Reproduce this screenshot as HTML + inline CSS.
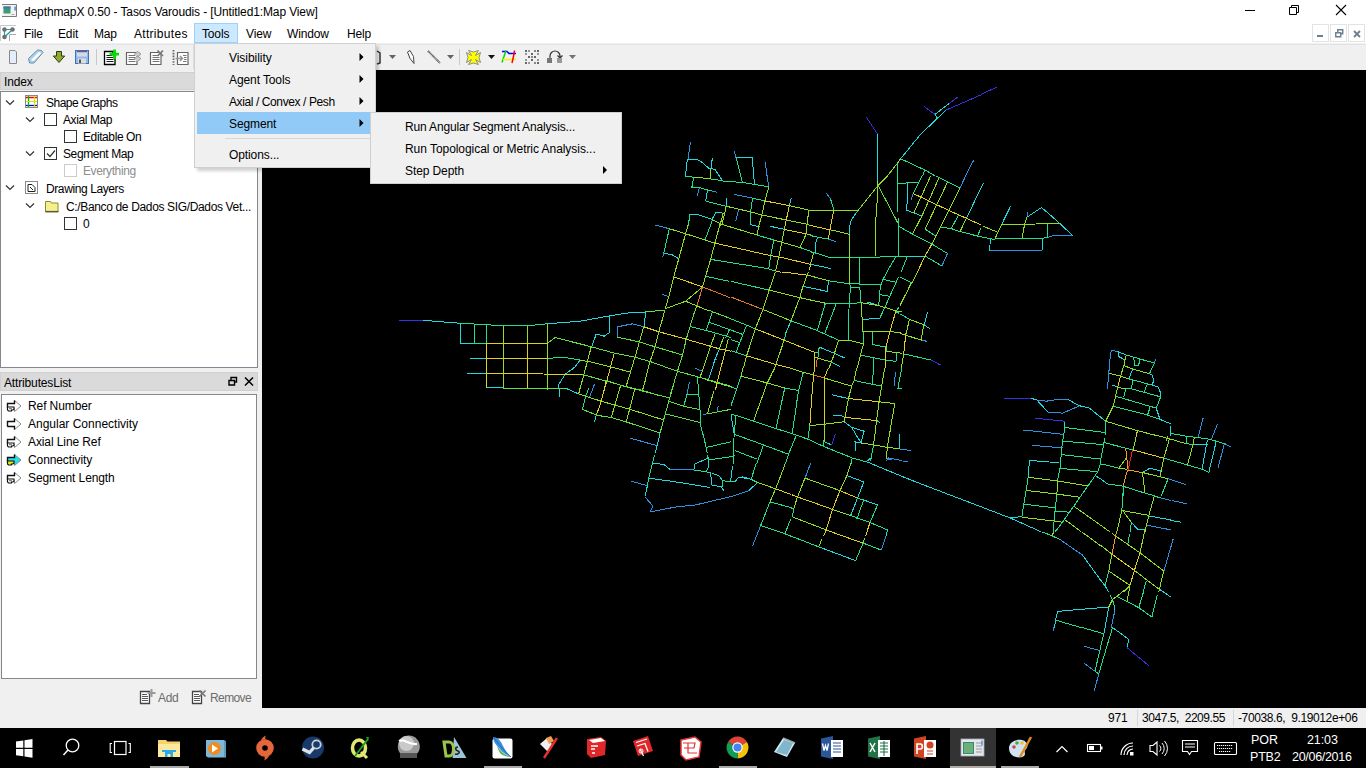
<!DOCTYPE html>
<html><head><meta charset="utf-8">
<style>
*{box-sizing:border-box;margin:0;padding:0}
html,body{width:1366px;height:768px;overflow:hidden;background:#f0f0f0;position:relative;font-family:"Liberation Sans",sans-serif;font-size:12px;color:#000}
.a{position:absolute}
.t{position:absolute;white-space:nowrap;line-height:14px;height:14px;letter-spacing:-0.15px}
.tb{position:absolute;white-space:nowrap;line-height:14px;height:14px;color:#fff;letter-spacing:-0.1px}
</style></head><body>
<!-- title bar -->
<div class="a" style="left:0;top:0;width:1366px;height:43px;background:#fff"></div>
<div class="a" style="left:0;top:44px;width:1366px;height:1px;background:#e3e3e3"></div>
<div class="t" style="left:24px;top:5px;letter-spacing:-0.12px">depthmapX 0.50 - Tasos Varoudis - [Untitled1:Map View]</div>
<!-- title icon -->
<svg class="a" style="left:2px;top:4px" width="16" height="13" viewBox="0 0 16 13">
<path d="M0 0.5H14.5V12.5H0" fill="#f2f2f2" stroke="#7a7a7a" stroke-width="1"/>
<rect x="1.5" y="2.5" width="7" height="7" fill="#3f9a74"/>
<rect x="1.5" y="2.5" width="7" height="2" fill="#3a78b8"/>
<rect x="12.5" y="2.5" width="1.2" height="4" fill="#2a6fd0"/>
<rect x="9.5" y="10" width="3" height="1" fill="#aaa"/>
</svg>
<!-- window controls -->
<div class="a" style="left:1245px;top:10px;width:10px;height:1px;background:#000"></div>
<svg class="a" style="left:1289px;top:4px" width="12" height="12" viewBox="0 0 12 12"><path d="M0.5 3.5h7v7h-7z M2.5 3.5v-2h7v7h-2" fill="none" stroke="#000"/></svg>
<svg class="a" style="left:1335px;top:4px" width="12" height="12" viewBox="0 0 12 12"><path d="M1 1L11 11M11 1L1 11" stroke="#000" stroke-width="1.1"/></svg>
<!-- menu bar -->
<svg class="a" style="left:0;top:24px" width="17" height="18" viewBox="0 24 17 18">
<path d="M0.5 41V25.5H16" stroke="#c8c8c8" fill="none"/>
<path d="M9.5 41V34.5H16" stroke="#aaa" fill="none"/>
<path d="M4.5 29.5H12.5L4.5 37Z" stroke="#22a0a0" stroke-width="1.2" fill="none"/>
<circle cx="4.5" cy="29.5" r="2.3" fill="#6f6f6f"/><circle cx="12.5" cy="29.5" r="2.3" fill="#6f6f6f"/><circle cx="4.5" cy="37" r="2.3" fill="#6f6f6f"/>
</svg>
<div class="t" style="left:24px;top:27px">File</div>
<div class="t" style="left:58px;top:27px">Edit</div>
<div class="t" style="left:94px;top:27px">Map</div>
<div class="t" style="left:134px;top:27px;letter-spacing:0.3px">Attributes</div>
<div class="a" style="left:194px;top:23px;width:44px;height:20px;background:#cce8ff;border:1px solid #99d1ff"></div>
<div class="t" style="left:202px;top:27px">Tools</div>
<div class="t" style="left:246px;top:27px">View</div>
<div class="t" style="left:287px;top:27px">Window</div>
<div class="t" style="left:347px;top:27px">Help</div>
<!-- MDI buttons -->
<div class="a" style="left:1312px;top:24px;width:17px;height:18px;border:1px solid #e3e3e3;background:#fff"></div>
<div class="a" style="left:1330px;top:24px;width:17px;height:18px;border:1px solid #e3e3e3;background:#fff"></div>
<div class="a" style="left:1348px;top:24px;width:17px;height:18px;border:1px solid #e3e3e3;background:#fff"></div>
<div class="a" style="left:1317px;top:35px;width:6px;height:2px;background:#6c7f90"></div>
<svg class="a" style="left:1335px;top:29px" width="9" height="9" viewBox="0 0 9 9"><path d="M0.75 3.75h5v4h-5z M2.75 3.75v-3h5v4h-2" fill="none" stroke="#6c7f90" stroke-width="1.4"/></svg>
<svg class="a" style="left:1353px;top:30px" width="8" height="8" viewBox="0 0 8 8"><path d="M1 1L7 7M7 1L1 7" stroke="#6c7f90" stroke-width="1.8"/></svg>
<!-- toolbar -->
<div class="a" style="left:0;top:45px;width:1366px;height:25px;background:#f0f0f0"></div>
<svg class="a" style="left:0;top:44px" width="600" height="26" viewBox="0 44 600 26">
<!-- new doc -->
<path d="M9.5 50.5h5.5l1.5 1.5v11.5h-7z" fill="#e4eefa" stroke="#8a8a8a"/>
<!-- open folder -->
<path d="M28.5 58.5l9-8.5 4 0.5 1.5 2-9 10.5h-4.5z" fill="#a9d3ea" stroke="#6d8fa5"/>
<path d="M31 60l8-8 2.5 1-8 8z" fill="#fff"/>
<!-- green arrow -->
<path d="M56.5 51.5h5v4.5h3.2l-5.7 6.5-5.7-6.5h3.2z" fill="#8faa2c" stroke="#2f3a10"/>
<!-- save -->
<rect x="75.5" y="50.5" width="13" height="13" fill="#8dbcef" stroke="#4a6fa8"/>
<rect x="77" y="51" width="10" height="1.2" fill="#6a4fb0"/>
<rect x="77" y="52.5" width="10" height="4" fill="#d8d8e0"/>
<rect x="78" y="58.5" width="8" height="5" fill="#ddd"/>
<rect x="79" y="59.5" width="2" height="3.5" fill="#555"/>
<!-- sep -->
<rect x="96" y="49" width="1" height="16" fill="#c8c8c8"/>
<!-- doc + -->
<path d="M104.5 51.5h8.5v1h2v12h-10.5z" fill="#fff" stroke="#000" stroke-width="1.3"/>
<path d="M106.5 55.5h6M106.5 57.5h7M106.5 59.5h7M106.5 61.5h7" stroke="#000" stroke-width="0.9"/>
<path d="M114.5 49.5v9.5M109.5 54.2h9.5" stroke="#00e000" stroke-width="2.8"/>
<!-- doc edit gray -->
<path d="M126.5 52.5h10.5v12h-10.5z" fill="#fff" stroke="#666" stroke-width="1.2"/>
<path d="M128.5 55.5h7M128.5 57.5h7M128.5 59.5h7M128.5 61.5h7" stroke="#666" stroke-width="0.9"/>
<path d="M134 54.5l3.5-3 3.5 2.5-3.5 3M134 59l3.5-3 3.5 2.5-3.5 3" fill="#ccc" stroke="#999" stroke-width="1"/>
<!-- doc x gray -->
<path d="M150.5 52.5h10.5v12h-10.5z" fill="#fff" stroke="#666" stroke-width="1.2"/>
<path d="M152.5 55.5h6M152.5 57.5h7M152.5 59.5h7M152.5 61.5h7" stroke="#666" stroke-width="0.9"/>
<path d="M157.5 50.5l5.5 5.5M163 50.5l-5.5 5.5" stroke="#777" stroke-width="1.7"/>
<!-- dotted doc -->
<path d="M173.5 50v15" stroke="#666" stroke-width="1.8" stroke-dasharray="1.6 1.2"/>
<path d="M177.5 52.5h10.5v12h-10.5z" fill="#fff" stroke="#666" stroke-width="1.2"/>
<path d="M183 55.5h3.5M183 61.5h3.5M184 57.5h2.5M184 59.5h2.5" stroke="#666" stroke-width="0.9"/>
<path d="M175.5 58.5h6M180 56l2.5 2.5-2.5 2.5" fill="none" stroke="#999" stroke-width="1.6"/>
<rect x="193" y="44" width="1" height="25" fill="#dcdcdc"/>
<!-- partial icon near 377 -->
<path d="M377 51l3 2v10l-3 1" fill="none" stroke="#333" stroke-width="1.5"/>
<path d="M389 55h7l-3.5 4z" fill="#5f656d"/>
<!-- pencil -->
<path d="M407.5 52l2.5-1.5 3.5 6 0.5 7-4-5z" fill="#fff" stroke="#444"/>
<!-- line -->
<path d="M428 51l12 12" stroke="#555" stroke-width="2" stroke-dasharray="1 0.5"/>
<path d="M447 55h7l-3.5 4z" fill="#5f656d"/>
<rect x="459" y="49" width="1" height="16" fill="#c8c8c8"/>
<!-- yellow cross -->
<path d="M468.5 50.5L473.5 52L478.5 50.5L475.5 55.5L480.5 52.5L479 57.5L480.5 62.5L475.5 59.5L478.5 64.5L473.5 63L468.5 64.5L471.5 59.5L466.5 62.5L468 57.5L466.5 52.5L471.5 55.5Z" fill="#ffff00" stroke="#8c8c8c" stroke-linejoin="round"/>
<path d="M488 55h7l-3.5 4z" fill="#111"/>
<!-- colored square -->
<path d="M502 51.5h5l2 2h7" stroke="#0000ff" stroke-width="1.5" fill="none"/>
<path d="M506 50.5l-2 6-2 6" stroke="#00dd00" stroke-width="1.5" fill="none"/>
<path d="M503 59.5h10h3" stroke="#ffee00" stroke-width="1.5" fill="none"/>
<path d="M514.5 50.5l-1 6-1.5 6.5" stroke="#ff0000" stroke-width="1.5" fill="none"/>
<!-- dotted grid -->
<g fill="#666">
<rect x="525" y="50" width="2" height="2"/><rect x="528" y="50" width="2" height="2" fill="#999"/><rect x="534" y="50" width="2" height="2" fill="#888"/><rect x="537" y="50" width="2" height="2"/>
<rect x="525" y="53" width="2" height="2" fill="#999"/><rect x="531" y="53" width="2" height="2"/><rect x="537" y="53" width="2" height="2" fill="#999"/>
<rect x="528" y="56" width="2" height="2"/><rect x="531" y="56" width="2" height="2" fill="#888"/><rect x="534" y="56" width="2" height="2"/>
<rect x="525" y="59" width="2" height="2" fill="#999"/><rect x="531" y="59" width="2" height="2"/><rect x="537" y="59" width="2" height="2" fill="#999"/>
<rect x="525" y="62" width="2" height="2"/><rect x="528" y="62" width="2" height="2" fill="#999"/><rect x="534" y="62" width="2" height="2" fill="#888"/><rect x="537" y="62" width="2" height="2"/>
</g>
<!-- arc -->
<path d="M550 58v-2a5 5 0 0 1 10 0v1M557.5 55.5l2.5 2.5 2.5-2.5" fill="none" stroke="#333" stroke-width="1.2"/>
<rect x="547" y="58" width="5" height="5" fill="#777"/><rect x="557" y="58" width="5" height="5" fill="#999"/>
<path d="M569 55h7l-3.5 4z" fill="#6d737a"/>

</svg>

<!-- left dock -->
<div class="a" style="left:0;top:70px;width:262px;height:638px;background:#f0f0f0"></div>
<div class="a" style="left:0;top:72px;width:258px;height:18px;background:#dadada;border:1px solid #d0d0d0"></div>
<div class="t" style="left:4px;top:75px">Index</div>
<div class="a" style="left:0;top:91px;width:258px;height:277px;background:#fff;border:1px solid #828790"></div>
<!-- tree rows -->
<svg class="a" style="left:0;top:92px" width="258" height="140" viewBox="0 92 258 140">
<g fill="none" stroke="#333" stroke-width="1.2">
<path d="M6 100.5l4 4 4-4"/>
<path d="M26 117.5l4 4 4-4"/>
<path d="M26 151.5l4 4 4-4"/>
<path d="M6 185.5l4 4 4-4"/>
<path d="M26 203.5l4 4 4-4"/>
</g>
<g fill="#fff" stroke="#333">
<rect x="44.5" y="113.5" width="12" height="12"/>
<rect x="64.5" y="130.5" width="12" height="12"/>
<rect x="44.5" y="147.5" width="12" height="12"/>
<rect x="64.5" y="217.5" width="12" height="12"/>
</g>
<rect x="64.5" y="164.5" width="12" height="12" fill="#fff" stroke="#ccc"/>
<path d="M47 153.5l3 3 5-6" fill="none" stroke="#333" stroke-width="1.2"/>
<!-- shape graphs icon -->
<rect x="25.5" y="95.5" width="12" height="12" fill="#fff" stroke="#888"/>
<path d="M26 97.5h11" stroke="#e00" stroke-width="1.5"/>
<path d="M26 105.5h11" stroke="#00d" stroke-width="1.3"/>
<path d="M28.5 96v11" stroke="#0b0" stroke-width="1.3"/>
<path d="M34.5 96v11" stroke="#dd0" stroke-width="1.3"/>
<path d="M26 101.5h11" stroke="#dd0" stroke-width="1"/>
<!-- drawing layers icon -->
<rect x="25.5" y="181.5" width="12" height="12" fill="#fff" stroke="#888"/>
<path d="M28 184.5h4l3 3v4h-7z" fill="#fff" stroke="#222"/>
<path d="M30 187l3 3" stroke="#222"/>
<!-- folder -->
<path d="M45.5 201.5h5l1 1.5h6.5v9h-12.5z" fill="#f5f08a" stroke="#8b8b30"/>
<path d="M45.5 211.5h13" stroke="#555" stroke-width="1.2"/>
</svg>
<div class="t" style="left:46px;top:96px;letter-spacing:-0.5px">Shape Graphs</div>
<div class="t" style="left:63px;top:113px;letter-spacing:-0.4px">Axial Map</div>
<div class="t" style="left:83px;top:130px;letter-spacing:-0.4px">Editable On</div>
<div class="t" style="left:63px;top:147px;letter-spacing:-0.4px">Segment Map</div>
<div class="t" style="left:83px;top:164px;letter-spacing:-0.4px;color:#8d8d8d">Everything</div>
<div class="t" style="left:46px;top:182px;letter-spacing:-0.4px">Drawing Layers</div>
<div class="t" style="left:66px;top:200px;letter-spacing:-0.35px">C:/Banco de Dados SIG/Dados Vet...</div>
<div class="t" style="left:83px;top:217px">0</div>

<div class="a" style="left:0;top:372px;width:258px;height:19px;background:#dadada;border:1px solid #d0d0d0"></div>
<div class="t" style="left:4px;top:376px">AttributesList</div>
<svg class="a" style="left:228px;top:376px" width="10" height="10" viewBox="0 0 10 10"><path d="M1 4.5h5.5v4.5h-5.5z M3 4.5v-3h5.5v4.5h-2" fill="none" stroke="#000" stroke-width="1.4"/></svg>
<svg class="a" style="left:244px;top:377px" width="10" height="9" viewBox="0 0 10 9"><path d="M1 0.5L9 8.5M9 0.5L1 8.5" stroke="#000" stroke-width="1.5"/></svg>
<div class="a" style="left:1px;top:394px;width:256px;height:285px;background:#fff;border:1px solid #828790"></div>
<svg class="a" style="left:0;top:396px" width="30" height="90" viewBox="0 396 30 90"><g transform="translate(7,400)"><path d="M0.5 3.5h7v-3l6.5 5.5-6.5 5.5v-3h-7z" fill="#fff" stroke="#888" stroke-width="1"/><path d="M7.5 0.5v3h-7v5" fill="none" stroke="#111" stroke-width="1.4"/><path d="M0.5 7h6.5v2l-1 1h-1.5v1h-3l-1-1z" fill="#fff" stroke="#111" stroke-width="1.1"/><path d="M2 8.7h3" stroke="#555" stroke-width="0.9"/></g><g transform="translate(7,418)"><path d="M0.5 3.5h7v-3l6.5 5.5-6.5 5.5v-3h-7z" fill="#fff" stroke="#888" stroke-width="1"/><path d="M7.5 0.5v3h-7v5" fill="none" stroke="#111" stroke-width="1.4"/><path d="M0.5 8.5h7v3" fill="none" stroke="#111" stroke-width="1.4"/></g><g transform="translate(7,436)"><path d="M0.5 3.5h7v-3l6.5 5.5-6.5 5.5v-3h-7z" fill="#fff" stroke="#888" stroke-width="1"/><path d="M7.5 0.5v3h-7v5" fill="none" stroke="#111" stroke-width="1.4"/><path d="M0.5 7h6.5v2l-1 1h-1.5v1h-3l-1-1z" fill="#fff" stroke="#111" stroke-width="1.1"/><path d="M2 8.7h3" stroke="#555" stroke-width="0.9"/></g><g transform="translate(7,454)"><path d="M0.5 3.5h7v-3l6.5 5.5-6.5 5.5v-3h-7z" fill="#22e0f0" stroke="#888" stroke-width="1"/><path d="M7.5 0.5v3h-7v5" fill="none" stroke="#111" stroke-width="1.4"/><path d="M0.5 7h6.5v2l-1 1h-1.5v1h-3l-1-1z" fill="#e8e800" stroke="#111" stroke-width="1.1"/></g><g transform="translate(7,472)"><path d="M0.5 3.5h7v-3l6.5 5.5-6.5 5.5v-3h-7z" fill="#fff" stroke="#888" stroke-width="1"/><path d="M7.5 0.5v3h-7v5" fill="none" stroke="#111" stroke-width="1.4"/><path d="M0.5 7h6.5v2l-1 1h-1.5v1h-3l-1-1z" fill="#fff" stroke="#111" stroke-width="1.1"/><path d="M2 8.7h3" stroke="#555" stroke-width="0.9"/></g></svg>
<div class="t" style="left:28px;top:399px;letter-spacing:-0.1px">Ref Number</div>
<div class="t" style="left:28px;top:417px;letter-spacing:0px">Angular Connectivity</div>
<div class="t" style="left:28px;top:435px;letter-spacing:-0.1px">Axial Line Ref</div>
<div class="t" style="left:28px;top:453px;letter-spacing:-0.1px">Connectivity</div>
<div class="t" style="left:28px;top:471px;letter-spacing:-0.1px">Segment Length</div>
<!-- add/remove -->
<svg class="a" style="left:135px;top:684px" width="80" height="24" viewBox="135 684 80 24">
<g fill="none" stroke="#444" stroke-width="1.3">
<path d="M140.5 691.5h9v12h-9z" fill="#fff"/><path d="M142 694.5h5M142 696.5h6M142 698.5h6M142 700.5h6" stroke-width="0.9"/>
<path d="M192.5 691.5h9v12h-9z" fill="#fff"/><path d="M194 694.5h5M194 696.5h6M194 698.5h6M194 700.5h6" stroke-width="0.9"/>
</g>
<path d="M151.5 689v8M147.5 693h8" stroke="#999" stroke-width="2"/>
<path d="M199.5 690.5l6 6M205.5 690.5l-6 6" stroke="#777" stroke-width="1.6"/>
</svg>
<div class="t" style="left:158px;top:691px;color:#6d6d6d;letter-spacing:-0.3px">Add</div>
<div class="t" style="left:210px;top:691px;color:#6d6d6d;letter-spacing:-0.6px">Remove</div>

<!-- map -->
<div class="a" style="left:262px;top:70px;width:1104px;height:638px;background:#000"></div>
<svg id="map" class="a" style="left:0;top:0" width="1366" height="708" viewBox="0 0 1366 708"><g fill="none" stroke-width="1" shape-rendering="crispEdges"><path d="M690.4 142.1L689.6 147.7L688.9 153.2L688.1 158.8M734.0 151.0L735.0 154.2L736.0 157.5M765.0 161.9L765.8 166.9L766.5 171.9L767.2 176.9L768.0 181.9L768.8 186.9M712.5 191.2L717.5 192.5M699.4 187.5L698.4 191.6L697.5 195.6M734.0 194.4L738.6 195.3L743.2 196.2L747.9 197.2L752.5 198.1M738.8 208.8L737.7 212.9L736.7 217.1L735.6 221.2M973.8 160.0L971.0 165.3L968.3 170.6L965.6 175.9M826.2 193.2L828.4 196.2L830.6 199.1M828.1 239.1L831.9 240.4L835.6 241.6M947.5 253.5L945.6 257.7L943.8 261.8L941.9 266.0M913.1 193.5L912.2 196.6L911.2 199.8M965.6 176.0L963.8 180.0L961.9 183.9L960.0 187.9M1027.5 212.2L1027.5 216.9M1047.6 237.5L1051.1 236.3L1054.7 235.1L1060.6 235.3L1066.5 235.4L1072.5 235.6M988.8 250.6L994.7 250.6L1000.7 250.5L1006.7 250.5L1012.6 250.5L1018.6 250.4L1024.6 250.4L1030.6 250.3L1036.5 250.3L1042.5 250.2M921.2 340.1L924.4 340.8L927.5 341.4M886.0 461.1L888.5 458.0L892.9 458.8L897.3 459.7L901.8 460.5M895.4 372.4L895.0 376.8L894.5 381.1L894.1 385.5M655.0 225.0L659.8 226.2L664.6 227.5L669.4 228.8M663.8 253.1L662.5 257.5M661.9 294.0L665.3 295.4L668.8 296.9M670.0 469.4L675.9 469.5L681.9 469.7L687.8 469.8L693.8 470.0M631.2 481.2L636.7 482.7L642.1 484.2L647.5 485.6M645.0 496.9L647.7 500.0L650.4 503.1L653.1 506.2L651.6 509.1L650.0 511.9L655.2 510.9L660.5 509.9L665.8 508.9L671.0 507.9L676.2 506.9L680.9 506.4L685.6 505.9L690.3 505.5L695.0 505.0L700.4 503.8L705.7 502.5L711.1 501.2L716.4 500.0L721.8 498.8L727.1 497.5L732.5 496.2L737.9 494.4L743.3 492.5L748.8 490.6M760.6 525.6L758.6 530.8L756.6 535.9L754.5 541.1L752.5 546.2M810.6 463.1L808.8 468.1L806.9 473.1L805.0 478.1M898.8 448.8L902.8 449.4L906.8 450.0L910.8 450.6M886.9 458.8L892.2 459.5M902.8 461.1L908.1 461.9M881.2 550.0L883.0 545.0L884.7 540.0L886.4 535.0M1036.9 400.0L1041.6 400.6L1046.2 401.2L1050.2 400.6L1054.2 400.0L1058.1 399.4L1063.1 399.4L1068.1 399.4M1048.1 412.2L1052.9 412.5L1057.7 412.8L1062.5 413.1L1067.9 410.8L1073.3 408.5L1078.8 406.2M1023.1 430.0L1028.9 430.6L1034.7 431.2L1040.5 431.9L1046.3 432.5L1052.1 433.1L1057.9 433.8L1063.8 434.4M1107.5 389.4L1107.9 384.0L1108.3 378.5L1108.8 373.1L1109.2 368.3L1109.6 363.5L1110.0 358.8L1110.6 354.7L1111.2 350.6L1116.9 351.2M1155.6 359.4L1154.4 363.1M1225.0 443.8L1227.8 445.3L1230.6 446.9M1203.1 418.1L1201.9 422.8L1200.6 427.5L1199.4 432.2L1198.1 436.9M1217.5 423.8L1215.4 429.2L1213.3 434.6L1211.2 440.0M1224.4 443.8L1223.1 448.5L1221.9 453.2L1220.6 458.0L1219.4 462.8L1218.1 467.5M1168.1 478.8L1172.5 480.2L1176.9 481.6L1181.2 483.0L1185.6 484.4M1031.9 445.4L1037.0 445.8L1042.1 446.2L1047.2 446.6L1052.3 447.0L1057.4 447.5L1062.5 447.9M1160.6 497.9L1165.7 499.1L1170.8 500.4M1147.5 525.4L1153.3 526.5L1159.1 527.6L1164.9 528.7L1170.8 529.8M1171.8 500.4L1177.0 501.6L1182.2 502.9L1187.5 504.1M1173.1 539.1L1171.6 544.5L1170.0 550.0L1168.4 555.4L1166.9 560.8L1165.3 566.2L1163.8 571.6M1060.0 539.5L1064.5 542.6L1069.0 545.8L1073.5 548.9L1078.0 552.0L1082.5 555.1M1115.0 609.5L1114.1 614.1L1113.1 618.7L1112.2 623.3L1111.2 627.9M1054.4 625.3L1053.1 630.6M1083.8 646.2L1089.2 647.7L1094.6 649.2L1100.0 650.6M1083.8 663.1L1087.5 665.8L1091.2 668.5L1095.0 671.2M1098.8 673.8L1097.3 679.4L1095.8 685.0L1094.4 690.6M715.1 359.2L716.9 359.2M695.0 368.3L698.5 369.7L701.9 371.0M617.5 337.0L617.5 331.9L617.5 326.8L622.5 325.8L627.5 324.8L632.5 323.8L638.1 325.2L643.8 326.8M630.0 438.1L635.4 439.6L640.8 441.1L646.1 442.6L651.5 444.1L656.9 445.6M594.4 384.4L592.7 388.8L591.1 393.1L589.4 397.5M689.4 381.9L688.6 386.1L687.7 390.2L686.9 394.4M702.5 414.4L707.5 413.8M718.1 406.2L716.9 411.2" stroke="#3090e0"/><path d="M688.1 158.8L687.2 159.4L686.8 164.1L686.2 168.8L685.8 172.6L685.2 176.5M687.2 159.4L692.1 159.4L696.9 159.4L699.7 160.9L702.5 162.5L705.5 165.3L708.5 168.1M712.2 158.1L711.8 163.4L711.2 168.8M708.5 168.1L711.8 168.8L715.0 169.4L717.5 173.1L720.0 176.9L722.5 180.6M736.0 157.5L741.4 157.4L746.8 157.3L752.2 157.2L752.7 162.7L753.1 168.1L753.5 173.5L754.0 178.9L754.4 184.4M707.5 190.0L706.6 195.6L705.6 201.2M726.2 198.1L726.2 202.2L726.2 206.2M791.2 198.1L790.3 201.9L789.4 205.6M690.0 214.0L693.4 214.2L696.9 214.4L700.0 215.3L703.1 216.2L707.5 217.8L711.9 219.4L714.1 215.8L716.2 212.2L719.7 212.7L723.1 213.1M877.5 134.0L877.5 140.0L877.5 146.0L877.5 151.9L877.5 157.9L877.5 163.9L877.5 169.9L877.5 175.9M935.0 114.4L939.6 110.8L944.2 107.3L948.8 103.8M900.6 158.8L903.9 154.8L907.1 150.8L910.3 146.9L913.5 142.9L916.8 139.0L920.0 135.0L923.5 131.6L927.0 128.2L930.5 124.9L934.0 121.5L937.5 118.1L941.9 114.1L946.2 110.0M877.5 176.0L877.5 181.0M858.1 210.4L854.7 215.1L851.2 219.8L850.3 223.5L849.4 227.2L849.4 230.7L849.4 234.1M817.5 237.2L816.2 241.0L815.0 244.8L815.0 248.8L815.0 252.9M907.5 256.0L913.3 256.0L919.2 256.0L925.0 256.0M810.0 264.1L815.2 265.2L820.3 266.3L825.5 267.4L830.6 268.5M907.5 182.2L907.4 187.9L907.2 193.5L907.1 199.1L907.0 204.8L906.9 210.4L910.3 211.6L913.8 212.9L917.8 214.4L921.9 216.0M980.8 188.5L978.4 193.3L976.1 198.1L973.8 202.9L971.5 207.7L969.2 212.5L966.9 217.2M983.4 183.1L981.1 188.1M1010.6 206.1L1008.4 210.7L1006.2 215.2L1003.9 219.8L1001.7 224.4M1027.5 216.9L1032.2 213.7L1036.9 210.6L1041.5 207.5L1046.0 211.4L1050.4 215.2L1054.9 219.1L1059.3 223.0L1062.9 226.3L1066.4 229.7L1069.9 233.1L1073.4 236.5M990.9 238.9L990.5 242.0M1042.5 237.5L1042.5 242.0M990.6 238.8L990.0 244.7L989.4 250.6M1042.5 242.2L1042.5 246.2L1042.5 250.2M927.5 311.9L926.5 316.2L925.4 320.6L924.4 325.0M828.5 280.8L827.9 286.1L827.2 291.4L822.4 290.4L817.5 289.4L812.6 288.4L807.8 287.4L802.9 286.4M791.0 320.8L789.3 324.7L787.7 328.7L786.0 332.6M867.2 302.0L871.2 303.2L875.2 304.5L879.1 305.8M862.2 319.5L868.1 319.1L873.9 318.7L879.8 318.2M819.1 347.0L824.1 349.1L829.1 351.2L834.1 353.2L837.9 354.9L841.6 356.6L845.4 358.2M831.0 362.0L835.4 364.2L839.8 366.4M923.8 324.5L926.9 326.7L930.0 328.9M832.2 394.9L837.7 396.1L843.1 397.4L848.5 398.6M832.9 415.5L838.5 415.8L844.1 416.1M876.6 420.5L879.8 422.4M844.1 421.8L847.9 424.6L851.6 427.4L855.8 428.6L860.0 429.9L864.1 431.1L863.1 435.1L862.0 439.0L861.0 443.0M851.6 427.4L854.0 431.3L856.3 435.2L858.7 439.1L861.0 443.0M855.4 442.4L855.7 446.8L856.0 451.1M824.1 441.8L827.9 443.3L831.6 444.9M866.0 461.8L868.5 459.9L871.0 458.0M731.0 414.9L731.8 419.4L732.6 423.9L733.3 428.5L734.1 433.0M897.9 388.6L901.8 388.6M899.8 434.2L899.5 439.2L899.3 444.2L899.1 449.2M663.8 253.1L668.1 254.1L672.5 255.0L675.6 256.9L678.8 258.8M750.0 224.4L754.7 225.6L759.4 226.9M770.0 226.2L774.8 227.3L779.6 228.3L784.4 229.4M647.5 485.6L646.2 490.9L645.0 496.2M652.5 463.1L658.1 463.8L663.8 464.4L666.9 466.9L670.0 469.4M693.8 470.0L694.4 466.9L695.0 463.8L699.4 461.9L703.8 460.0L708.1 458.1L708.4 462.2L708.8 466.2L706.2 471.2M732.5 466.2L731.9 471.2L731.2 476.2L730.6 481.2M710.6 472.5L711.0 476.7L711.5 480.8L711.9 485.0L716.6 485.9L721.2 486.9L723.8 490.6M711.9 473.1L715.3 474.4L718.8 475.6L720.6 478.1L722.5 480.6M735.0 481.9L737.5 478.1L742.5 476.9L746.9 478.1L751.2 479.4M648.8 478.1L654.0 478.9L659.2 479.6L664.4 480.3L669.6 481.0L674.8 481.8L680.0 482.5L685.0 483.3L690.0 484.2L695.0 485.0L700.0 485.8L705.0 486.7L710.0 487.5M748.8 490.6L753.1 486.6L757.5 482.5M740.0 476.9L745.6 478.4M887.5 530.0L886.9 532.9L886.2 535.9M863.8 500.0L868.3 501.7L872.9 503.3L877.5 505.0M846.9 475.6L852.5 477.7L858.1 479.8L863.8 481.9L861.7 487.3L859.6 492.7L857.5 498.1L855.8 502.5L854.1 506.9L852.3 511.2L850.6 515.6M866.9 461.9L872.4 464.1L877.8 466.4L883.3 468.7L888.8 470.9L894.3 473.2L899.8 475.5L905.3 477.7L910.8 480.0M854.4 441.9L857.5 442.2L860.6 442.5M910.8 480.0L916.3 482.1L921.9 484.2L927.5 486.4L933.1 488.5L938.6 490.6L944.2 492.8L949.8 494.9L955.4 497.0L961.0 499.1L966.5 501.2L972.1 503.4L977.7 505.5L983.3 507.6L988.8 509.8L994.4 511.9L1000.0 514.0M818.8 546.9L824.0 548.8L829.3 550.8L834.6 552.8L839.8 554.7L845.1 556.7L850.4 558.7L855.6 560.6M1030.6 398.1L1033.8 399.1L1036.9 400.0M1068.1 399.4L1071.7 401.5L1075.2 403.5L1078.8 405.6L1084.1 406.9L1089.4 408.1L1093.4 411.4L1097.5 414.7L1101.6 418.0L1105.6 421.2M1036.9 400.0L1040.6 404.1L1044.4 408.2L1048.1 412.2M1065.0 421.2L1064.7 424.4L1064.4 427.5M1116.9 351.2L1121.6 353.1L1126.2 355.0M1118.8 352.5L1118.1 356.2L1121.6 358.1L1125.0 360.0M1149.4 373.8L1151.9 374.4L1152.8 377.5L1153.8 380.6L1151.9 385.0M1132.5 369.4L1130.6 374.1L1128.8 378.8M1111.9 385.0L1117.5 386.9M1151.9 385.0L1155.0 385.9L1158.1 386.9L1159.4 390.0L1160.6 393.1L1160.6 396.9M1156.2 408.1L1158.1 413.8L1160.0 419.4L1165.4 421.6L1170.8 423.8M1170.0 426.2L1170.0 431.1L1170.0 435.9M1193.1 444.4L1197.9 444.4L1202.7 444.4L1207.5 444.4M1207.5 440.0L1206.9 443.1L1206.2 446.2L1205.4 451.0L1204.5 455.8L1203.6 460.5L1202.8 465.2L1201.9 470.0M1216.2 441.2L1215.0 446.5L1213.8 451.7L1212.5 456.9L1211.2 462.1L1210.0 467.3L1208.8 472.5M1142.5 472.5L1146.2 470.3L1150.0 468.1L1155.6 469.7L1161.2 471.2M1100.0 478.1L1103.4 480.9L1106.9 483.8M1029.4 460.4L1034.4 460.8L1039.4 461.2L1044.4 461.6L1049.4 462.0L1054.4 462.5L1059.4 462.9M1029.4 460.4L1029.0 466.0L1028.5 471.6L1028.1 477.2M1131.2 522.2L1134.4 525.7L1137.5 529.1L1141.2 529.1L1145.0 529.1M1096.2 476.0L1100.0 478.7M1148.8 516.0L1154.2 516.9L1159.8 517.9L1165.2 518.8L1170.8 519.8M1000.0 514.1L1005.0 516.0L1010.0 517.9L1015.9 517.2L1021.9 516.6M1010.0 517.9L1015.2 520.2L1020.4 522.5L1025.6 524.9L1030.8 527.2L1036.0 529.5L1041.2 531.9M1170.0 520.2L1175.3 521.2L1180.6 522.2M1100.0 579.1L1102.5 582.6L1105.0 586.0L1106.9 588.9L1108.8 591.9M1082.5 555.1L1085.5 559.3L1088.6 563.5L1091.6 567.7L1094.6 571.9L1097.7 576.1L1100.7 580.3M1158.8 588.9L1162.8 591.6L1166.8 594.3L1170.8 597.0M1108.8 607.0L1103.1 607.5L1097.4 608.0L1091.7 608.5L1086.0 608.9L1080.3 609.4L1074.6 609.9L1068.9 610.4L1063.2 610.9L1057.5 611.4L1056.6 615.8L1055.6 620.1L1055.0 624.0L1054.4 627.9M1108.8 607.0L1107.8 612.2L1106.9 617.4L1105.9 622.7L1105.0 627.9M1104.8 628.5L1103.8 633.8M1112.5 627.5L1116.6 630.5L1120.6 633.4L1124.7 636.4L1128.8 639.4L1127.8 643.4L1126.9 647.5M719.2 349.2L717.1 354.2L715.1 359.2L713.4 364.4L711.7 369.7L710.0 374.9L708.3 380.2M422.5 320.2L427.9 320.7L433.2 321.1L438.6 321.5L443.9 322.0L449.3 322.4L454.6 322.8L460.0 323.2M547.5 323.8L552.9 323.3L558.3 322.9L563.8 322.5L569.2 322.1L574.6 321.7L580.0 321.2L585.0 320.3L590.0 319.4L595.0 318.5L600.0 317.6L605.0 316.7L610.0 315.8L614.8 315.0L619.5 314.2L624.2 313.5L629.0 312.8L633.8 312.0L639.6 312.0L645.5 312.0L645.1 316.8L644.7 321.5L644.2 326.2M460.0 323.2L460.0 328.2L460.0 333.2L460.0 338.2L460.0 343.2L464.8 343.2L469.5 343.2L474.2 343.2M470.0 358.2L475.4 358.2L480.8 358.2L486.2 358.2M467.0 373.2L471.8 373.2L476.6 373.2L481.4 373.2L486.2 373.2M486.2 387.5L491.9 387.5L497.6 387.5L503.2 387.5M566.2 388.2L570.4 390.2L574.6 392.1L578.8 394.0M580.0 360.0L577.5 363.5L575.0 367.0L571.7 369.5L568.3 372.0L565.0 374.5L561.9 379.5L558.8 384.5L559.0 388.7L559.2 392.8L559.5 397.0M609.2 315.5L609.2 321.3L609.2 327.2L609.2 333.0L607.5 333.8L604.2 336.2L600.2 335.1L596.2 334.0L594.8 338.2L593.2 342.5L591.8 346.8M560.0 388.1L563.5 388.4L566.9 388.8L570.9 390.5L574.8 392.2L578.8 394.0M596.2 415.6L595.3 418.8L594.4 421.9M660.0 433.1L658.9 438.1L657.7 443.1L656.5 448.1L655.4 453.1M700.0 409.6L700.0 413.9L700.0 418.2L700.0 422.5" stroke="#20d8e0"/><path d="M685.2 176.5L689.5 176.8L693.8 177.1M710.0 178.8L714.4 179.5L718.8 180.2L723.1 181.0L728.0 181.4L732.8 181.8L737.7 182.1L742.5 182.5L746.5 183.1L750.4 183.8L754.4 184.4L759.2 185.2L764.0 186.0L768.8 186.9M736.0 157.5L737.3 162.5L738.6 167.5L739.9 172.5L741.2 177.5L742.5 182.5M693.8 177.1L692.8 182.2L691.9 187.2L695.6 187.4L699.4 187.5L703.4 188.8L707.5 190.0L712.5 191.2M705.6 201.2L710.8 202.5L715.9 203.8L721.1 205.0L726.2 206.2M752.5 198.1L756.7 199.1L760.8 200.0L765.0 201.0M752.5 198.1L751.9 202.7L751.2 207.3L750.6 211.9L750.4 215.9L750.2 220.0L750.0 224.0M690.0 214.0L689.4 218.0L688.8 221.9L688.1 225.9M935.0 114.4L937.5 118.1M897.5 163.1L897.5 167.4L897.5 171.6L897.5 175.9M900.6 158.8L905.5 161.0L910.4 163.2L915.2 165.5L920.1 167.8L925.0 170.0L930.0 172.9L935.0 175.9M925.0 170.0L923.8 172.9L922.5 175.9M830.6 199.1L832.2 204.6L833.8 210.0M810.0 235.4L813.8 236.3L817.5 237.2L822.8 238.2L828.1 239.1M810.0 251.6L815.0 252.9L820.2 254.5L825.4 256.2L830.6 257.9L836.2 257.8L841.7 257.7L847.3 257.6L852.8 257.6L858.4 257.5L863.9 257.4L869.5 257.3L875.0 257.2L880.4 257.0L885.8 256.8L891.2 256.6L896.7 256.4L902.1 256.2L907.5 256.0M897.5 176.0L897.6 181.9L897.7 187.9L897.7 193.8L897.8 199.8L897.9 205.7L898.0 211.6L898.0 217.6L898.1 223.5L898.1 228.9L898.1 234.3L898.1 239.8L898.1 245.2L898.1 250.6L898.1 256.0M859.4 257.2L859.4 262.1L859.4 267.0L859.4 271.9M896.2 256.0L893.9 260.0L891.6 263.9L889.2 267.9L886.9 271.9M907.5 256.0L905.4 261.3L903.3 266.6L901.2 271.9M898.1 226.0L902.9 228.7L907.7 231.4L912.5 234.1L917.3 236.6L922.2 239.1L927.0 241.6L931.9 244.1L935.8 246.5L939.7 248.8L943.6 251.2L947.5 253.5M925.0 256.0L929.2 258.5L933.4 261.0L937.7 263.5L941.9 266.0M897.5 183.5L902.7 183.2L907.8 182.9L913.0 182.6L918.1 182.2M921.9 176.0L919.7 180.4L917.5 184.8L915.3 189.1L913.1 193.5M925.0 229.1L928.5 231.4L932.1 233.7L935.6 236.0M936.2 176.0L941.0 178.4L945.8 180.8L950.5 183.1L955.2 185.5L960.0 187.9M940.0 227.2L945.6 227.9L951.2 228.5L955.6 230.1L960.0 231.6L964.4 232.7L968.8 233.8L973.1 234.9L977.5 236.0M958.8 214.8L956.2 219.3L953.8 223.9L951.2 228.5M980.8 228.5L979.1 232.2L977.5 236.0M976.9 236.1L981.6 237.0L986.2 237.9L990.9 238.9L994.7 239.4M1047.6 223.9L1047.6 228.4L1047.6 232.9L1047.6 237.5M994.7 238.9L1000.6 238.8L1006.4 238.7L1012.3 238.6L1018.2 238.5L1024.1 238.4L1030.0 238.3L1035.9 238.2L1041.7 238.1L1047.6 237.9M900.0 276.9L904.0 279.0L907.9 281.0L911.9 283.1M900.0 313.8L904.7 316.6L909.4 319.4M828.5 280.8L833.8 281.5L839.1 282.3L844.4 283.1L849.8 283.9M731.0 281.4L736.4 282.6L741.9 283.9L747.3 285.1L752.8 286.4L758.2 287.6L763.7 288.9L769.1 290.1M825.4 303.2L830.2 303.4L835.1 303.5L840.0 303.6L844.9 303.8L849.8 303.9L855.4 303.2L861.0 302.6M786.0 332.6L785.1 336.4L784.1 340.1M791.0 320.8L796.0 322.6L801.0 324.5L806.0 326.4L811.0 328.2L816.0 330.1L820.5 332.1L825.0 334.1L829.5 336.1L834.0 338.1L838.5 340.1M731.0 318.9L736.2 321.0L741.4 323.0L746.6 325.1L751.0 327.0L755.4 328.9M731.0 330.1L735.0 331.6L738.9 333.0L742.9 334.5M746.6 325.1L744.8 329.8L742.9 334.5L741.2 339.0L739.4 343.6L737.7 348.1L736.0 352.6M731.0 339.5L735.4 341.1L739.8 342.6M731.0 350.8L736.2 352.4L741.4 354.1L746.6 355.8M825.4 303.2L823.8 308.8L822.1 314.2L820.5 319.8L818.9 325.2L817.2 330.8M836.0 304.5L834.1 309.3L832.2 314.1L830.4 318.9L828.5 323.7L826.6 328.5L824.8 333.2M849.8 283.9L850.4 287.6L855.1 287.6L859.8 287.6L860.2 292.6L860.6 297.6L861.0 302.6M850.4 287.6L850.0 293.0L849.5 298.5L849.1 303.9L849.0 309.1L848.9 314.2L848.9 319.4L848.8 324.6L848.7 329.8L848.6 334.9L848.5 340.1M859.8 272.0L859.8 276.2L859.8 280.3L859.8 284.5L865.1 284.5L870.4 284.5L875.7 284.5L881.0 284.5L880.1 289.5L879.1 294.5L884.4 295.4L889.8 296.4M887.2 272.0L885.1 275.8L882.9 279.5L881.0 284.5M883.5 279.5L889.1 280.8L894.8 282.0M898.5 277.0L896.3 281.8L894.1 286.7L891.9 291.5L889.8 296.4L887.8 300.8L885.8 305.1L883.8 309.5L881.8 313.9L879.8 318.2M898.9 307.0L896.0 312.0L898.9 313.2M863.5 332.0L863.5 337.9L863.5 343.9M872.2 332.0L872.2 336.2L872.2 340.3L872.2 344.5L876.8 345.3L881.4 346.2L886.0 347.0M819.1 347.0L818.8 352.0L818.5 357.0M814.1 352.0L818.5 352.6M860.4 355.1L864.8 356.0L869.1 356.8L873.5 357.6L877.7 358.5L881.8 359.3L886.0 360.1M873.5 357.6L873.5 362.8L873.5 367.9M886.0 347.0L886.6 351.4L891.6 352.0L896.6 352.6L896.3 357.0L896.0 361.4L891.0 360.8L886.0 360.1M903.8 353.9L909.2 355.1L914.8 356.4L920.2 357.6L925.8 358.9L931.2 360.1M784.8 388.0L789.3 388.8L793.9 389.7L798.5 390.5M741.0 376.1L739.5 380.5L738.1 384.9L736.6 389.2L734.8 394.7L732.9 400.1L731.0 405.5M731.0 386.8L733.8 388.0L736.6 389.2M784.8 388.0L783.5 393.8L782.2 399.6L781.0 405.4L779.8 411.2L778.5 417.0L777.2 422.8L776.0 428.6M803.5 371.8L802.2 376.4L801.0 381.1L799.8 385.8L798.5 390.5L797.7 395.9L796.9 401.3L796.2 406.7L795.4 412.1L794.6 417.5L793.8 422.8L793.0 428.2L792.2 433.6M809.8 425.5L809.1 430.1L808.5 434.7L807.9 439.2M854.1 380.5L858.7 381.4L863.2 382.4L867.7 383.3L872.2 384.2L876.9 385.2L881.6 386.1M873.5 368.0L873.1 373.4L872.7 378.8L872.2 384.2M731.0 414.2L736.0 415.5L740.4 416.9L744.8 418.3L749.1 419.7L753.5 421.1L759.1 423.0L764.8 424.9L770.4 426.8L776.0 428.6L781.4 430.3L786.8 432.0L792.2 433.6L797.5 435.5L802.7 437.4L807.9 439.2L812.9 441.5L817.9 443.8L822.9 446.1L827.8 448.1L832.7 450.1L837.6 452.1L842.5 454.0L847.4 456.0L852.2 458.0L856.8 459.2L861.4 460.5L866.0 461.8M873.5 445.5L872.7 449.7L871.8 453.8L871.0 458.0M736.0 415.5L735.4 421.3L734.8 427.2L734.1 433.0L734.0 438.1L733.9 443.3L733.8 448.4L733.7 453.6L733.6 458.7L733.5 463.9M734.1 434.2L739.0 436.0L743.9 437.8L748.8 439.6L753.7 441.3L758.6 443.1L763.5 444.9L768.5 446.8L773.5 448.6L778.5 450.5L783.5 452.4L788.5 454.2M796.0 436.1L794.1 440.7L792.2 445.2L790.4 449.7L788.5 454.2L786.9 459.1L785.4 463.9M734.8 450.5L739.2 452.2L743.8 454.0L748.2 455.8L752.8 457.5L757.2 459.2M763.5 444.9L761.8 449.6L760.1 454.4L758.3 459.1L756.6 463.9M852.2 458.0L851.6 460.9L851.0 463.9M901.8 368.0L900.8 373.2L899.8 378.3L898.8 383.5L897.9 388.6M669.4 228.8L668.2 233.6L667.1 238.5L666.0 243.4L664.9 248.2L663.8 253.1M710.6 259.4L716.4 260.3L722.2 261.2L728.1 262.2L733.9 263.1L739.7 264.1L745.5 265.0L751.3 265.9L757.1 266.9L762.9 267.8L768.8 268.8L772.2 270.0L775.6 271.2M705.6 276.2L711.4 277.5L717.1 278.8L722.8 280.0L728.6 281.2M756.9 235.0L762.5 236.7L768.1 238.3L773.8 240.0M800.0 247.5L805.4 249.4L810.8 251.2M773.8 240.0L772.7 245.2L771.7 250.4L770.6 255.6L770.0 260.0L769.4 264.4L768.8 268.8M712.5 220.0L710.6 225.0L708.8 230.0L706.9 235.0L705.0 240.0M850.0 283.8L855.0 283.8L860.0 283.8M879.4 294.4L879.1 300.0L878.8 305.6M654.4 455.0L653.4 459.1L652.5 463.1L651.2 468.1L650.0 473.1L648.8 478.1L648.1 481.9L647.5 485.6M693.8 470.0L699.4 470.8L705.0 471.7L710.6 472.5M707.5 455.0L708.1 458.1L708.8 460.0L713.8 459.2L718.8 458.5L723.8 457.8L728.8 457.0L733.8 456.2L734.4 455.0M722.5 480.6L722.2 484.4L721.9 488.1M722.5 480.6L726.9 481.2L731.2 481.9L735.0 481.9M751.2 479.4L754.4 480.9L757.5 482.5M755.9 463.9L754.4 469.1L752.8 474.2L751.2 479.4M770.0 501.9L768.1 506.6L766.2 511.4L764.4 516.1L762.5 520.9L760.6 525.6M770.0 501.9L775.2 503.3L780.4 504.7L785.6 506.1L790.8 507.5M760.6 525.6L765.5 527.2L770.4 528.9L775.2 530.5L780.1 532.1L785.0 533.8L787.9 535.0L790.8 536.2M790.8 518.8L788.8 523.8L786.9 528.8L785.0 533.8M850.6 515.6L855.5 517.3L860.3 519.1L865.2 520.8L870.0 522.5L874.4 524.4L878.8 526.2L883.1 528.1L887.5 530.0M857.5 498.1L860.6 499.1L863.8 500.0M877.5 505.0L875.6 509.4L873.8 513.8L871.9 518.1L870.0 522.5M793.8 508.8L793.1 512.8L792.5 516.9M789.1 507.2L793.8 508.8M863.8 500.0L862.0 504.7L860.3 509.4L858.6 514.1L856.9 518.8M823.1 445.6L823.8 440.0M871.9 455.4L870.6 460.6M789.8 535.6L794.6 537.5L799.5 539.4L804.3 541.2L809.1 543.1L813.9 545.0L818.8 546.9M855.6 560.6L857.5 556.2L859.4 551.9L861.2 547.5L863.1 543.1L867.7 544.8L872.2 546.6L876.7 548.3L881.2 550.0M1064.4 427.5L1070.2 428.2L1076.0 428.9L1081.8 429.6L1087.6 430.4L1093.4 431.1L1099.2 431.8L1105.0 432.5M1064.4 427.5L1064.1 431.7L1063.8 435.9M1105.6 421.2L1105.4 426.1L1105.2 431.0L1105.0 435.9M1126.2 355.0L1131.9 356.6L1137.5 358.2L1143.1 359.9L1148.8 361.5L1154.4 363.1L1151.9 368.4L1149.4 373.8M1133.8 357.5L1134.1 361.6L1134.4 365.6L1138.8 365.6L1139.1 362.5L1139.4 359.4M1128.8 378.8L1133.1 380.0L1137.8 381.2L1142.5 382.5L1147.2 383.8L1151.9 385.0M1133.1 380.0L1132.2 384.4L1131.2 388.8M1125.6 388.8L1131.2 388.8L1136.1 390.1L1141.0 391.5L1145.9 392.8L1150.8 394.2L1155.7 395.5L1160.6 396.9M1125.6 388.8L1124.7 393.1L1123.8 397.5M1147.5 383.8L1145.6 388.4L1143.8 393.1M1115.6 396.2L1120.7 397.7L1125.8 399.2L1130.9 400.7L1135.9 402.2L1141.0 403.7L1146.1 405.2L1151.2 406.6L1156.2 408.1M1160.6 396.9L1159.2 400.6L1157.7 404.4L1156.2 408.1M1113.1 406.2L1118.9 407.7L1124.6 409.2L1130.3 410.6L1136.0 412.1L1141.8 413.5L1147.5 415.0L1151.7 416.5L1155.8 417.9L1160.0 419.4M1150.0 407.5L1148.8 411.2L1147.5 415.0M1104.4 438.4L1103.8 443.8L1102.8 448.8L1101.9 453.8L1100.9 458.8L1100.0 463.8M1103.8 442.5L1109.2 443.9L1114.7 445.3L1120.2 446.7L1125.6 448.1L1129.4 449.1L1133.1 450.0M1163.8 458.1L1168.5 459.5L1173.2 460.9L1178.0 462.2L1182.8 463.6L1187.5 465.0L1192.5 466.5L1197.5 467.9L1202.5 469.4L1205.6 470.9L1208.8 472.5M1170.0 433.1L1175.4 434.2L1180.8 435.2L1186.2 436.2L1191.6 436.9L1196.9 437.5L1202.2 438.1L1207.5 438.8L1211.9 440.0L1216.2 441.2L1220.6 442.5L1225.0 443.8M1186.2 436.2L1186.2 440.0L1186.2 443.8L1189.7 444.1L1193.1 444.4M1161.2 471.2L1160.0 476.9M1123.1 486.2L1123.4 491.1L1123.8 495.9M1100.0 463.8L1104.7 464.8L1109.4 465.9L1114.1 467.0L1118.8 468.1M1106.9 483.8L1112.3 484.6L1117.7 485.4L1123.1 486.2L1128.6 488.0L1134.1 489.7L1139.5 491.4L1145.0 493.1L1150.0 494.5L1155.0 495.9M1168.1 478.8L1166.4 483.0L1164.7 487.3L1163.0 491.6L1161.2 495.9M1063.8 436.0L1062.5 441.0L1068.4 441.5L1074.3 442.1L1080.2 442.6L1086.1 443.1L1092.0 443.7L1097.9 444.2L1103.8 444.8M1100.6 462.9L1099.1 467.6L1097.5 472.2M1062.5 441.0L1062.0 446.4L1061.5 451.8L1061.0 457.1L1060.5 462.5L1060.0 467.9L1059.2 472.2L1058.3 476.6L1057.5 481.0M1056.9 494.8L1056.2 500.2L1055.6 505.6L1055.0 511.0L1054.5 516.2L1054.1 521.4L1053.6 526.7L1053.1 531.9M1060.6 454.5L1066.3 455.2L1072.1 455.8L1077.8 456.5L1083.5 457.1L1089.2 457.8L1094.9 458.5L1100.6 459.1M1060.0 468.5L1065.4 468.9L1070.7 469.4L1076.1 469.8L1081.4 470.3L1086.8 470.7L1092.1 471.2L1097.5 471.6M1122.8 493.0L1122.5 498.8L1122.2 504.6L1121.9 510.4M1131.2 522.2L1130.9 527.1L1130.6 531.9M1155.4 496.4L1160.6 497.9M1097.5 472.2L1094.6 476.4L1091.7 480.6L1088.8 484.8L1085.8 488.9L1082.9 493.1L1080.0 497.2L1077.1 501.4L1074.2 505.6L1071.2 509.8L1068.3 513.9L1065.4 518.1L1062.5 522.2L1060.0 525.5L1057.5 528.7L1055.0 531.9M1028.1 477.2L1027.5 481.6L1026.9 486.0L1026.2 490.4L1025.4 495.0L1024.6 499.5L1023.8 504.1L1023.1 508.5L1022.5 512.9L1021.9 517.2M1023.8 504.1L1029.0 504.8L1034.2 505.4L1039.4 506.0L1044.6 506.6L1049.8 507.2L1055.0 507.9M1055.0 511.0L1059.8 511.4L1064.6 511.8L1069.4 512.2M1108.8 571.0L1107.5 576.0L1106.2 581.0L1105.0 586.0M1129.7 533.8L1128.6 539.6L1127.5 545.4M1146.2 581.0L1144.7 586.4L1143.1 591.9M1042.5 532.0L1047.2 533.9L1051.9 535.8L1055.9 537.6L1060.0 539.5M1109.6 594.5L1112.5 599.5M1157.4 594.5L1156.0 600.1L1154.6 605.8L1153.2 611.4L1151.9 617.0M1116.9 596.4L1121.2 598.6L1125.6 600.9L1130.0 603.1L1134.4 605.4L1138.8 607.6L1143.1 610.8L1147.5 613.9L1151.9 617.0M1143.6 591.5L1142.0 596.9L1140.4 602.2L1138.8 607.6M1112.5 599.5L1113.8 604.5L1115.0 609.5M1055.6 620.1L1060.9 621.7L1066.1 623.2L1071.4 624.8L1076.6 626.3L1081.9 627.9M1082.4 627.6L1087.7 629.2L1093.1 630.7L1098.4 632.2L1103.8 633.8L1102.5 639.1L1101.2 644.5L1100.0 649.8L1098.8 655.2L1097.5 660.5L1096.2 665.9L1095.0 671.2L1098.8 673.8M1112.5 627.5L1111.0 632.6L1109.4 637.8L1107.9 642.9L1106.4 648.1L1104.9 653.2L1103.3 658.3L1101.8 663.5L1100.3 668.6L1098.8 673.8M729.2 330.0L727.4 334.1L725.6 338.2M697.3 377.4L697.8 381.6L698.2 385.8L698.7 390.0M460.0 323.2L465.8 323.6L471.7 323.9L477.5 324.2L483.3 324.6L489.2 324.9L495.0 325.2L500.4 325.3L505.8 325.4L511.2 325.5L516.7 325.6L522.1 325.7L527.5 325.8L532.5 325.2L537.5 324.8L542.5 324.2L547.5 323.8M474.2 324.5L474.2 329.2L474.2 333.9L474.2 338.6L474.2 343.2L480.2 343.2L486.2 343.2M486.2 324.5L486.2 329.2L486.2 333.9L486.2 338.6L486.2 343.2M547.5 358.2L553.3 358.0L559.2 357.8L565.0 357.5L570.0 358.3L575.0 359.2L580.0 360.0M691.2 326.8L696.2 328.0L701.2 329.2L706.2 330.5L711.2 331.9L716.1 333.3L721.1 334.7L726.0 336.1L731.0 337.5M708.8 322.2L714.3 324.2L719.9 326.1L725.4 328.1L731.0 330.0M712.5 311.8L710.9 316.4L709.4 321.1L707.8 325.8L706.2 330.5M588.8 388.1L587.2 392.2L585.6 396.2L584.6 400.6L583.5 405.0L582.5 409.4M628.1 380.0L626.9 383.4L625.6 386.9M686.9 394.4L685.9 398.3L684.8 402.3L683.8 406.2M686.9 394.4L692.8 394.4L698.8 394.4M698.3 389.6L698.8 394.4L699.2 399.5L699.6 404.5L700.0 409.6L700.0 413.9L700.0 418.2L700.0 422.5L701.2 427.5L702.5 432.5L703.8 437.5L705.0 442.5L706.2 447.5L707.2 452.8M706.2 447.5L711.1 446.4L716.0 445.3L721.0 444.1L725.9 443.0L730.8 441.9" stroke="#20e090"/><path d="M693.8 177.1L699.2 177.7L704.6 178.2L710.0 178.8M710.6 168.8L710.3 173.8L710.0 178.8M768.8 186.9L767.5 191.5L766.2 196.0L765.0 200.6L764.0 205.4L762.9 210.2L761.9 215.0L760.3 220.4L758.8 225.9M726.2 206.2L731.1 207.4L736.0 208.5L740.9 209.6L745.8 210.8L750.6 211.9L756.2 213.4L761.9 215.0L766.8 216.0L771.6 217.0L776.5 218.0L781.4 219.0L786.2 220.0L791.6 221.1L796.9 222.2L802.2 223.3L807.5 224.4M726.2 206.2L725.2 210.9L724.1 215.6L723.0 220.3L721.9 225.0M789.4 205.6L794.7 206.9L800.1 208.1L805.4 209.4L810.8 210.6M808.8 210.6L808.1 215.7L807.5 220.8L806.9 225.9M711.9 219.4L715.4 221.2L719.0 223.1L722.5 225.0M723.1 213.1L722.1 217.4L721.0 221.6L720.0 225.9M807.5 224.4L810.0 225.4M900.6 158.8L897.5 163.1L894.2 167.4L890.8 171.6L887.5 175.9M877.5 181.0L878.1 185.4L881.2 182.2L884.4 179.1L887.5 176.0M878.1 185.4L874.8 189.5L871.5 193.7L868.1 197.9L864.8 202.0L861.5 206.2L858.1 210.4M810.0 210.0L815.9 210.0L821.9 210.0L827.8 210.0L833.8 210.0L838.6 210.1L843.5 210.2L848.4 210.2L853.2 210.3L858.1 210.4M849.4 234.1L849.4 239.5L849.4 244.9L849.4 250.3L849.4 255.7L849.4 261.1L849.4 266.5L849.4 271.9M830.0 229.8L834.7 230.8L839.4 231.9L844.1 233.0L848.8 234.1M878.1 185.4L877.8 190.7L877.4 196.1L877.1 201.4L876.7 206.8L876.3 212.2L876.0 217.5L875.6 222.9L875.5 228.6L875.4 234.3L875.3 240.1L875.2 245.8L875.1 251.5L875.0 257.2M813.8 252.9L812.5 257.0L811.2 261.2L810.0 265.4M930.6 176.0L928.2 181.3L925.8 186.5L923.4 191.8L921.0 197.1L918.6 202.3L916.2 207.6L913.8 212.9M938.8 178.5L936.3 183.9L933.9 189.2L931.5 194.6L929.1 199.9L926.7 205.3L924.3 210.6L921.9 216.0L919.5 220.5L917.2 225.1L914.8 229.6L912.5 234.1M947.5 182.2L945.0 187.5L942.5 192.7L940.0 197.9L937.5 203.1L935.0 208.3L932.5 213.5L930.0 218.7L927.5 223.9L925.0 229.1M960.0 187.9L957.4 193.0L954.9 198.1L952.3 203.2L949.8 208.3L947.2 213.4L944.7 218.6L942.1 223.7L939.5 228.8L937.0 233.9L934.4 239.0L931.9 244.1M966.9 217.2L964.6 222.0L962.3 226.8L960.0 231.6M983.4 226.2L988.3 228.3L993.1 230.3L998.0 232.3M1001.7 224.4L999.8 228.3L998.0 232.3L996.3 235.8L994.7 239.4M1001.7 224.4L1007.4 224.3L1013.2 224.2L1018.9 224.2L1024.7 224.1L1030.4 224.1L1036.1 224.0L1041.9 223.9L1047.6 223.9L1053.5 223.4L1059.3 223.0M1027.0 216.9L1025.8 220.6L1024.7 224.4L1023.7 229.0L1022.8 233.7L1021.9 238.4M911.2 283.1L909.0 287.6L906.8 292.1L904.5 296.6L902.2 301.1L900.0 305.6M909.4 319.4L914.4 321.2L919.4 323.1L924.4 325.0M909.4 319.4L908.8 322.6L908.1 325.9M807.2 275.1L812.6 276.5L817.9 277.9L823.2 279.3L828.5 280.8M849.1 272.0L849.4 277.9L849.8 283.9M775.4 272.0L773.8 276.5L772.2 281.1L770.7 285.6L769.1 290.1L774.2 291.4L779.3 292.6L784.4 293.9L789.5 295.1L794.6 296.4L799.8 297.6L804.9 298.8L810.0 299.9L815.1 301.0L820.2 302.1L825.4 303.2M808.5 272.0L806.6 276.8L804.8 281.6L802.9 286.4L801.3 292.0L799.8 297.6L798.0 302.2L796.2 306.9L794.5 311.5L792.8 316.1L791.0 320.8M762.9 309.5L767.6 311.4L772.2 313.2L776.9 315.1L781.6 317.0L786.3 318.9L791.0 320.8M769.1 290.1L767.6 295.0L766.0 299.8L764.4 304.7L762.9 309.5L761.0 314.3L759.1 319.2L757.2 324.0L755.4 328.9L753.6 334.2L751.9 339.6L750.1 345.0L748.4 350.4L746.6 355.8L745.6 359.8L744.5 363.8L743.5 367.9M784.1 340.1L782.5 345.0L780.9 349.9L779.2 354.8L777.6 359.6L776.0 364.5L774.8 367.9M861.0 302.6L865.5 303.4L870.1 304.2L874.6 305.0L879.1 305.8L884.8 307.4L890.4 309.1L896.0 310.8L901.8 312.0M861.0 302.6L861.4 308.2L861.8 313.9L862.2 319.5L862.5 323.7L862.7 327.8L862.9 332.0L868.2 331.9L873.6 331.8L879.0 331.6L884.4 331.5L889.8 331.4L893.8 332.0L897.8 332.6L901.8 333.2M838.5 340.1L843.5 340.1L848.5 340.1L853.5 341.4L858.5 342.6L863.5 343.9M838.5 340.1L837.0 344.9L835.6 349.7L834.1 354.5L832.5 359.0L830.8 363.4L829.1 367.9M814.1 357.0L819.8 358.7L825.4 360.3L831.0 362.0M863.5 343.9L861.9 349.5L860.4 355.1L859.3 359.4L858.3 363.6L857.2 367.9M886.6 351.4L891.7 352.0L896.7 352.6L901.8 353.2M917.5 272.0L915.6 275.8L913.8 279.5L911.9 283.2M908.1 325.1L906.9 330.1L905.6 335.1L910.8 336.8L916.0 338.5L921.2 340.1L922.1 334.9L922.9 329.7L923.8 324.5M903.8 353.9L902.9 358.5L902.1 363.2L901.2 367.9M742.9 368.0L741.9 372.1L741.0 376.1L746.2 377.5L751.5 378.9L756.8 380.2L762.0 381.6L767.2 383.0L771.6 384.2L776.0 385.5L780.4 386.8L784.8 388.0M774.8 368.0L772.2 373.0L769.8 378.0L767.2 383.0L765.3 388.4L763.3 393.9L761.4 399.3L759.4 404.8L757.4 410.2L755.5 415.7L753.5 421.1M789.8 368.0L794.3 369.5L798.9 370.9L803.5 372.4L808.5 373.6L813.5 374.9M824.1 424.2L824.1 430.1L824.1 435.9L824.1 441.8M809.8 425.5L814.5 425.1L819.3 424.7L824.1 424.2L829.1 423.6L834.1 423.0L839.1 422.4L844.1 421.8M824.1 378.0L829.6 379.6L835.1 381.2L840.6 382.9L846.1 384.5L851.6 386.1M856.6 368.0L855.8 372.2L855.0 376.3L854.1 380.5L852.9 383.3L851.6 386.1L850.6 390.3L849.5 394.5L848.5 398.6L847.4 404.4L846.3 410.2L845.2 416.0L844.1 421.8M884.8 368.0L884.0 372.5L883.2 377.1L882.4 381.6L881.6 386.1L880.8 391.3L880.0 396.5L879.1 401.8L878.5 406.4L877.9 411.1L877.2 415.8L876.6 420.5L876.0 425.5L875.4 430.5L874.8 435.5L874.1 440.5L873.5 445.5M879.1 401.8L884.3 402.4L889.5 403.0L894.8 403.6M861.0 443.0L865.2 443.6L869.3 444.2L873.5 444.9L878.1 445.7L882.7 446.5L887.2 447.4L892.9 448.0L898.5 448.6M894.8 403.6L893.8 409.1L892.9 414.6L891.9 420.0L891.0 425.5L890.1 431.0L889.1 436.4L888.2 441.9L887.2 447.4L886.9 453.0L886.6 458.6M669.4 228.8L674.8 230.4L680.2 232.1L685.6 233.8L690.5 235.3L695.3 236.9L700.2 238.4L705.0 240.0L710.0 241.6L715.0 243.1M688.1 224.4L686.9 229.1L685.6 233.8L684.2 238.8L682.9 243.8L681.5 248.8L680.1 253.8L678.8 258.8L677.5 263.3L676.2 267.8L675.0 272.3L673.8 276.9L672.5 281.9L671.2 286.9L670.0 291.9L668.8 296.9L667.5 301.0L666.2 305.2L665.0 309.4M665.0 308.8L670.2 306.9L675.3 305.0L680.5 303.1L685.6 301.2L689.8 297.7L694.1 294.1L698.3 290.5L702.5 286.9M685.6 301.2L690.2 303.2L694.9 305.1L699.5 307.0L704.1 308.9L708.8 310.9M696.2 306.2L695.6 310.9M720.0 223.8L718.8 228.6L717.5 233.4L716.2 238.3L715.0 243.1L713.5 248.5L712.1 254.0L710.6 259.4L709.0 265.0L707.3 270.6L705.6 276.2L704.1 281.6L702.5 286.9M785.4 224.6L784.4 229.4L783.2 234.9L782.1 240.4L781.0 245.9L779.9 251.4L778.8 256.9L777.7 261.7L776.7 266.5L775.6 271.2M720.0 223.8L725.3 225.4L730.5 227.0L735.8 228.6L741.1 230.2L746.3 231.8L751.6 233.4L756.9 235.0M773.8 240.0L779.0 241.5L784.2 243.0L789.5 244.5L794.8 246.0L800.0 247.5M759.1 225.0L758.0 230.0L756.9 235.0M806.2 233.8L810.8 235.0M806.9 224.4L806.6 229.1L806.2 233.8L804.2 238.3L802.1 242.9L800.0 247.5M757.5 482.5L762.0 484.1L766.6 485.6L771.1 487.2L775.6 488.8M785.0 464.6L783.1 469.5L781.2 474.3L779.4 479.1L777.5 483.9L775.6 488.8L773.8 493.1L771.9 497.5L770.0 501.9M832.5 509.4L837.0 510.9L841.6 512.5L846.1 514.1L850.6 515.6M805.0 478.1L810.0 479.9L815.0 481.7L820.0 483.5L825.0 485.3L830.0 487.1L835.0 488.8L840.0 490.6M805.0 478.1L803.1 482.8L801.2 487.5L799.4 492.2L797.5 496.9L796.2 500.8L795.0 504.8L793.8 508.8M792.5 516.9L797.3 518.8L802.1 520.6L807.0 522.5L811.8 524.4L816.6 526.2L821.4 528.1L826.2 530.0M851.1 462.5L849.7 466.9L848.3 471.2L846.9 475.6L844.6 480.6L842.3 485.6L840.0 490.6M863.1 543.1L864.8 538.0M822.2 538.4L820.5 542.7L818.8 546.9M1105.6 421.2L1110.9 422.8L1116.2 424.4L1121.6 425.9L1126.9 427.5L1132.2 429.1L1137.5 430.6L1142.2 431.9L1146.9 433.1L1151.6 434.4L1156.2 435.6M1105.6 421.2L1108.1 416.2L1110.6 411.2L1113.1 406.2L1114.4 401.2L1115.6 396.2L1116.6 391.9L1117.5 387.5M1120.6 376.2L1122.2 370.9L1123.8 365.6L1125.0 360.3L1126.2 355.0M1108.8 373.1L1112.7 374.2L1116.7 375.2L1120.6 376.2L1124.7 377.5L1128.8 378.8M1123.8 365.6L1128.8 367.5L1133.8 369.4L1139.0 370.8L1144.2 372.3L1149.4 373.8M1117.5 387.5L1121.6 388.1L1125.6 388.8M1153.4 434.7L1158.8 436.0L1164.1 437.4L1169.4 438.8L1175.0 440.4L1180.6 442.1L1186.2 443.8M1136.4 435.5L1135.3 440.3L1134.2 445.2L1133.1 450.0M1169.4 438.8L1168.0 443.6L1166.6 448.4L1165.2 453.3L1163.8 458.1L1162.8 462.8L1161.9 467.5L1160.9 472.2L1160.0 476.9M1194.4 436.9L1193.8 440.6L1193.1 444.4L1191.7 449.5L1190.3 454.7L1188.9 459.8L1187.5 465.0M1126.9 457.5L1124.2 461.0L1121.5 464.6L1118.8 468.1L1123.1 468.8L1127.5 469.4M1142.5 472.5L1147.6 473.8L1152.8 475.0L1157.9 476.2L1163.0 477.5L1168.1 478.8M1142.5 472.5L1143.1 477.7L1143.8 482.8L1144.4 488.0L1145.0 493.1M1057.5 481.0L1057.3 485.6L1057.1 490.2L1056.9 494.8M1167.5 436.0L1166.6 441.5M1121.9 510.4L1127.2 511.4L1132.6 512.4L1138.0 513.4L1143.4 514.4L1148.8 515.4M1121.9 510.4L1120.6 515.8L1119.4 521.1L1118.1 526.5L1116.9 531.9M1123.1 511.0L1125.8 514.8L1128.5 518.5L1131.2 522.2M1154.4 496.0L1153.0 500.8L1151.6 505.7L1150.2 510.5L1148.8 515.4L1147.5 520.9L1146.2 526.4L1145.0 531.9M1028.1 477.2L1034.0 478.0L1039.9 478.8L1045.8 479.5L1051.6 480.2L1057.5 481.0L1062.6 481.8L1067.7 482.7L1072.8 483.5L1077.9 484.3L1083.0 485.2L1088.1 486.0M1026.2 490.4L1031.4 491.0L1036.5 491.6L1041.6 492.2L1046.7 492.9L1051.8 493.5L1056.9 494.1L1062.7 494.9L1068.4 495.7L1074.2 496.5L1080.0 497.2M1021.9 517.2L1027.2 517.9L1032.5 518.5L1037.8 519.1L1043.1 519.8L1048.4 520.4L1053.8 521.0L1058.1 521.6L1062.5 522.2M1065.0 519.8L1069.1 522.8L1073.1 525.8L1077.2 528.8L1081.2 531.9M1074.4 506.6L1078.8 509.8L1083.3 512.9L1087.7 516.1L1092.2 519.2L1096.6 522.4L1101.1 525.6L1105.5 528.7L1110.0 531.9M1145.0 529.8L1143.8 535.5L1142.5 541.3L1141.2 547.1L1140.0 552.9M1130.0 585.4L1129.4 588.6L1128.8 591.9M1111.9 554.1L1110.8 559.8L1109.8 565.4L1108.8 571.0M1111.7 533.0L1115.6 536.0L1120.5 539.4L1125.4 542.8L1130.2 546.1L1135.1 549.5L1140.0 552.9L1144.8 556.5L1149.5 560.1L1154.2 563.8L1159.0 567.4L1163.8 571.0L1162.5 576.2L1161.2 581.4L1160.0 586.7L1158.8 591.9M1100.0 544.8L1104.0 547.9L1107.9 551.0L1111.9 554.1M1108.8 571.0L1113.0 573.9L1117.2 576.8L1121.5 579.6L1125.8 582.5L1130.0 585.4M1134.4 570.4L1138.4 573.5L1142.5 576.6L1146.6 579.8L1150.6 582.9L1154.7 586.0L1158.8 589.1M1130.0 585.4L1126.9 588.6L1123.8 591.9M1053.8 532.0L1051.9 535.8M1081.9 532.0L1086.7 535.5L1091.5 539.1L1096.2 542.6L1101.0 546.2M1129.0 591.2L1127.9 596.6L1126.9 602.0M1125.6 589.3L1121.2 592.8L1116.9 596.4L1112.5 599.5L1110.6 603.2L1108.8 607.0M723.8 336.9L722.2 341.0L720.7 345.1L719.2 349.2M728.3 338.7L726.9 344.4L725.6 350.1M503.2 325.8L503.2 331.4L503.2 337.1L503.2 342.8L503.2 348.5L503.2 354.2L503.2 359.8L503.2 365.5L503.2 371.2L503.2 376.9L503.2 382.6L503.2 388.2M527.0 325.8L527.0 331.6L527.0 337.4L527.0 343.2M547.5 323.8L547.5 329.7L547.5 335.7L547.5 341.7L547.5 347.7L547.5 353.6L547.5 359.6L547.5 365.6L547.5 371.6L547.5 377.5L547.5 383.5L547.5 389.5M580.0 360.5L584.0 360.9L588.0 361.2L593.5 362.6L599.0 364.0L604.5 365.4L610.0 366.8L615.3 368.1L620.6 369.5L625.9 370.9L631.2 372.2M665.0 310.0L663.4 315.4L661.9 320.9L660.3 326.3L658.8 331.8L657.5 336.8L656.2 341.8L655.0 346.8L653.3 351.7L651.7 356.6L650.0 361.5L648.5 367.3L647.0 373.1L645.5 378.9L644.0 384.7L642.5 390.5M643.8 326.8L642.3 331.8L640.8 336.9L639.4 342.0L637.9 347.1L636.5 352.2L635.0 357.2L633.5 362.1L632.1 366.9L630.6 371.8L629.2 376.6L627.7 381.4L626.2 386.2M591.2 346.8L589.8 352.4L588.2 358.1L586.8 363.7L585.2 369.4L583.8 375.0L582.5 379.5L581.2 384.0L580.0 388.5L578.8 393.0M715.0 333.8L713.1 339.2L711.2 344.7L709.4 350.2L707.5 355.6L705.6 361.1L703.8 366.6L701.9 372.0L700.0 377.5M578.8 394.0L584.4 395.8L590.0 397.6L595.6 399.4L601.2 401.2L606.8 402.8L612.2 404.4L617.8 405.9L623.2 407.4L628.8 409.0L633.8 410.6L638.8 412.1L643.8 413.7L648.8 415.3L653.8 416.9L658.8 418.4L663.8 420.0M582.5 380.0L581.2 384.7L580.0 389.3L578.8 394.0M620.6 385.6L619.0 390.9L617.5 396.2L615.9 401.6L614.4 406.9L612.8 412.2L611.2 417.5M634.8 389.4L633.3 394.8L631.9 400.2L630.5 405.6L629.1 411.1L627.7 416.5L626.2 421.9M645.6 380.0L644.0 385.5L642.5 391.0M713.8 391.2L712.2 396.9L710.6 402.5L709.1 408.1L707.5 413.8M707.5 380.0L712.1 381.4L716.8 382.8L721.5 384.1L726.1 385.5L730.8 386.9" stroke="#90e020"/><path d="M765.0 201.0L769.9 201.9L774.8 202.8L779.6 203.8L784.5 204.7L789.4 205.6L788.3 210.4L787.3 215.2L786.2 220.0L785.6 222.9L785.0 225.9M833.8 210.0L832.8 214.9L831.9 219.9L830.9 224.8L830.0 229.8L829.1 234.4L828.1 239.1M810.0 225.4L815.0 226.5L820.0 227.6L825.0 228.7L830.0 229.8M931.9 244.1L929.6 248.1L927.3 252.0L925.0 256.0L922.5 261.3L920.0 266.6L917.5 271.9M913.1 193.5L918.2 195.9L923.3 198.3L928.4 200.7L933.5 203.1L938.6 205.6L943.7 208.0L948.8 210.4L954.1 212.8L959.4 215.2L964.8 217.6L970.1 220.0L975.4 222.4L980.8 224.8M782.2 272.0L787.2 272.6L792.2 273.2L797.2 273.9L802.2 274.5L807.2 275.1M755.4 328.9L760.2 330.8L765.0 332.6L769.8 334.5L774.5 336.4L779.3 338.2L784.1 340.1L789.0 342.1L793.9 344.1L798.8 346.1L803.7 348.0L808.6 350.0L813.5 352.0M746.6 355.8L751.5 357.2L756.4 358.7L761.3 360.1L766.2 361.6L771.1 363.0L776.0 364.5L780.6 365.6L785.2 366.8L789.8 367.9M896.0 310.8L894.4 316.1L892.9 321.4L891.3 326.7L889.8 332.0L888.5 337.0L887.2 342.0L886.0 347.0L885.8 352.2L885.7 357.4L885.5 362.7L885.4 367.9M814.1 352.0L814.1 357.3L814.1 362.6L814.1 367.9M900.0 333.2L905.6 335.1L905.2 339.8L904.7 344.5L904.2 349.2L903.8 353.9M814.8 368.0L814.1 371.4L813.5 374.9L813.1 380.5L812.7 386.1L812.2 391.8L811.8 397.4L811.4 403.0L811.0 408.6L810.6 414.2L810.2 419.9L809.8 425.5M828.5 368.0L826.3 373.0L824.1 378.0L824.1 383.8L824.1 389.6L824.1 395.3L824.1 401.1L824.1 406.9L824.1 412.7L824.1 418.5L824.1 424.2M848.5 398.6L853.6 399.1L858.7 399.7L863.8 400.2L868.9 400.7L874.0 401.2L879.1 401.8M844.1 417.4L849.5 417.9L855.0 418.4L860.4 418.9L865.8 419.5L871.2 420.0L876.6 420.5M715.0 243.1L720.6 244.4L726.1 245.6L731.7 246.9L737.2 248.1L742.8 249.4L748.4 250.6L753.9 251.9L759.5 253.1L765.1 254.4L770.6 255.6L774.7 256.2L778.8 256.9L784.1 258.1L789.4 259.4L794.8 260.6L800.1 261.9L805.4 263.1L810.8 264.4M673.8 276.9L678.5 278.5L683.3 280.2L688.1 281.9L692.9 283.5L697.7 285.2L702.5 286.9M775.6 271.2L780.8 272.1M784.4 229.4L789.8 230.5L795.3 231.6L800.8 232.7L806.2 233.8M810.8 265.0L808.8 270.6M775.6 488.8L780.7 490.6L785.7 492.5L790.8 494.4M792.0 494.8L797.5 496.9L802.5 498.7L807.5 500.4L812.5 502.2L817.5 504.0L822.5 505.8L827.5 507.6L832.5 509.4M840.0 490.6L844.4 492.5L848.8 494.4L853.1 496.2L857.5 498.1M870.0 522.5L868.5 527.0L867.1 531.4L865.6 535.9M826.2 530.0L831.7 532.0L837.1 533.9L842.5 535.9M840.0 490.6L838.1 495.3L836.2 500.0L834.4 504.7L832.5 509.4L830.9 514.5L829.4 519.7L827.8 524.8L826.2 530.0L825.0 532.9L823.8 535.9M841.7 535.6L847.1 537.5L852.4 539.4L857.8 541.2L863.1 543.1M1137.5 430.6L1136.2 435.9M1117.5 387.5L1119.1 381.9L1120.6 376.2M1133.1 450.0L1138.2 451.4L1143.3 452.7L1148.4 454.1L1153.5 455.4L1158.6 456.8L1163.8 458.1M1140.0 552.9L1138.6 557.2L1137.2 561.6L1135.8 566.0L1134.4 570.4L1132.9 575.4L1131.5 580.4L1130.0 585.4M1111.9 554.1L1116.4 557.4L1120.9 560.6L1125.4 563.9L1129.9 567.1L1134.4 570.4M725.6 350.1L724.1 355.6L722.7 361.0L721.2 366.5L719.8 372.0L718.4 377.4L716.9 382.9L716.2 386.5L715.6 390.0M486.2 343.2L486.2 348.8L486.2 354.3L486.2 359.8L486.2 365.4L486.2 370.9L486.2 376.4L486.2 382.0L486.2 387.5M527.0 343.2L527.0 348.9L527.0 354.5L527.0 360.1L527.0 365.8L527.0 371.4L527.0 377.0L527.0 382.6L527.0 388.2M486.2 343.2L491.8 343.2L497.4 343.2L503.0 343.2L508.5 343.2L514.1 343.2L519.7 343.2L525.2 343.2L530.8 343.2L536.4 343.2L541.9 343.2L547.5 343.2M486.2 358.2L491.8 358.2L497.4 358.2L503.0 358.2L508.5 358.2L514.1 358.2L519.7 358.2L525.2 358.2L530.8 358.2L536.4 358.2L541.9 358.2L547.5 358.2M486.2 373.2L491.9 373.3L497.6 373.4L503.2 373.5L508.9 373.5L514.6 373.6L520.2 373.7L525.9 373.8L531.5 373.8L537.2 373.9L542.9 374.0L548.5 374.1L554.2 374.1L559.9 374.2L565.5 374.3L571.2 374.4L576.8 374.4L582.5 374.5M643.8 326.8L648.8 328.4L653.8 330.1L658.8 331.8L664.2 333.2L669.8 334.8L675.2 336.2L680.8 337.8L686.2 339.2L691.9 340.9L697.5 342.5L703.1 344.1L708.8 345.8L714.4 347.4L720.0 349.0L725.5 350.1L731.0 351.2M614.2 353.0L612.8 358.6L611.2 364.3L609.8 369.9L608.2 375.6L606.8 381.2L605.3 386.1L603.9 390.9L602.5 395.8M606.2 380.6L605.0 385.8L603.8 390.9L602.5 396.1L601.2 401.2L599.6 406.0L597.9 410.8L596.2 415.6" stroke="#e0d020"/><path d="M866.2 117.1L869.1 121.3L871.9 125.6L874.7 129.8L877.5 134.0M923.8 106.2L927.5 109.0L931.2 111.7L935.0 114.4M948.8 103.8L953.1 100.5L957.5 97.2M946.2 110.0L951.2 107.9L956.1 105.7L961.0 103.6L966.0 101.4L970.9 99.3L975.8 97.1L980.8 95.0M980.7 94.6L986.1 92.1L991.6 89.5L997.0 87.0M931.2 360.1L935.9 362.6L940.6 365.1M835.4 434.2L833.5 439.6L831.6 444.9M1004.4 398.1L1009.6 398.1L1014.9 398.1L1020.1 398.1L1025.4 398.1L1030.6 398.1M1035.0 418.1L1040.0 418.6L1045.0 419.2L1050.0 419.7L1055.0 420.2L1060.0 420.7L1065.0 421.2M1126.9 647.5L1131.2 651.1L1135.6 654.8L1140.0 658.4L1144.4 662.0L1148.8 665.6M398.8 320.2L404.7 320.2L410.6 320.2L416.6 320.2L422.5 320.2" stroke="#3a30e0"/><path d="M878.1 185.4L880.6 190.1L883.1 194.9L885.6 199.7L888.1 204.4L890.6 209.2L893.1 214.0L895.6 218.7L898.1 223.5M645.5 312.0L650.4 311.5L655.2 311.0L660.1 310.5L665.0 310.0M503.2 388.2L509.0 388.2L514.7 388.2L520.4 388.2L526.2 388.2L531.9 388.2L537.6 388.2L543.3 388.2L549.1 388.2L554.8 388.2L560.5 388.2L566.2 388.2M547.5 343.2L551.2 340.4L555.0 337.5L560.2 338.8L565.4 340.1L570.5 341.5L575.7 342.8L580.9 344.1L586.1 345.4L591.2 346.8L596.9 348.3L602.5 349.9L608.1 351.4L613.8 353.0L619.1 354.1L624.4 355.1L629.7 356.2L635.0 357.2L640.0 358.7L645.0 360.1L650.0 361.5L655.5 363.4L661.0 365.4L666.5 367.4L672.0 369.3L677.5 371.2L682.5 372.6L687.5 374.0L692.5 375.4L697.5 376.8L703.1 378.3L708.7 379.9L714.2 381.5L719.8 383.1L725.4 384.7L731.0 386.2M582.5 374.5L587.4 375.9L592.2 377.2L597.0 378.6L601.9 379.9L606.8 381.2L611.3 382.5L615.9 383.8L620.4 385.0L625.0 386.2L629.4 387.3L633.8 388.4L638.1 389.4L642.5 390.5L646.9 391.8L651.2 393.1L655.6 394.4L660.0 395.8M616.8 337.0L622.2 338.2L627.8 339.4L633.2 340.6L638.8 341.8L644.2 343.4L649.6 345.1L655.0 346.8L660.5 348.4L666.0 350.1L671.5 351.7L677.0 353.4L682.5 355.0M708.7 310.2L714.2 312.4L719.8 314.5L725.4 316.6L731.0 318.8M694.6 311.5L692.9 317.1L691.2 322.6L689.6 328.2L687.9 333.7L686.2 339.2L685.0 344.5L683.8 349.8L682.5 355.0L680.8 360.4L679.2 365.8L677.5 371.2L676.0 376.1L674.5 381.1L673.0 385.9L671.5 390.9L670.0 395.8M582.5 409.4L587.5 411.4L592.5 413.4L597.5 415.4L602.1 416.1L606.7 416.8L611.2 417.5L616.2 419.0L621.2 420.4L626.2 421.9L631.9 423.8L637.5 425.6L643.1 427.5L648.8 429.4L654.4 431.2L660.0 433.1M606.2 380.6L611.2 382.2L616.2 383.8L621.2 385.3L626.2 386.9L631.7 388.3L637.1 389.6L642.5 391.0L648.0 392.4L653.5 393.8L659.0 395.3L664.5 396.7L670.0 398.1M668.8 401.2L673.8 402.9L678.8 404.6L683.8 406.2L689.2 407.4L694.6 408.5L700.0 409.6M666.2 414.0L671.9 415.4L677.5 416.8L683.1 418.2L688.8 419.7L694.4 421.1L700.0 422.5M675.0 380.0L673.4 385.3L671.9 390.6L670.3 395.9L668.8 401.2L667.3 406.6L665.8 411.9L664.4 417.2L662.9 422.5L661.5 427.8L660.0 433.1M707.5 413.8L713.3 412.7L719.1 411.6L724.9 410.5L730.8 409.4" stroke="#60e040"/><path d="M731.0 297.0L736.3 299.1L741.6 301.2L746.9 303.2L752.2 305.3L757.6 307.4L762.9 309.5M817.2 358.2L816.6 362.6L816.0 367.0M813.5 374.9L818.8 376.4L824.1 378.0M702.5 286.9L708.1 289.1L713.6 291.2L719.2 293.4L724.8 295.6L730.3 297.8M702.5 286.9L701.1 291.7L699.7 296.6L698.3 301.4L696.9 306.2" stroke="#e07828"/><path d="M1132.5 450.0L1131.4 455.0L1130.3 460.0L1129.2 465.0L1128.1 470.0" stroke="#f02020"/><path d="M1125.6 448.1L1126.2 452.8L1126.9 457.5L1127.2 463.1L1127.5 468.8M1127.5 470.0L1132.5 470.8L1137.5 471.7L1142.5 472.5M1127.5 470.0L1126.0 475.4L1124.6 480.8L1123.1 486.2M1116.9 530.9L1115.6 536.0L1114.7 540.5L1113.8 545.1L1112.8 549.6L1111.9 554.1" stroke="#f0a020"/></g></svg>
<!-- status bar -->
<div class="a" style="left:0;top:708px;width:1366px;height:20px;background:#f0f0f0"></div>
<div class="t" style="left:1108px;top:711px">971</div>
<div class="a" style="left:1137px;top:710px;width:1px;height:16px;background:#d7d7d7"></div>
<div class="t" style="left:1142px;top:711px;letter-spacing:-0.45px">3047.5,&nbsp; 2209.55</div>
<div class="a" style="left:1233px;top:710px;width:1px;height:16px;background:#d7d7d7"></div>
<div class="t" style="left:1238px;top:711px;letter-spacing:-0.38px">-70038.6,&nbsp; 9.19012e+06</div>
<!-- taskbar -->
<div class="a" style="left:0;top:728px;width:1366px;height:40px;background:#000"></div>
<div class="a" style="left:950px;top:728px;width:46px;height:40px;background:#333"></div>
<div class="a" style="left:150px;top:766px;width:39px;height:2px;background:#a9a9a9"></div>
<div class="a" style="left:484px;top:766px;width:38px;height:2px;background:#a9a9a9"></div>
<div class="a" style="left:719px;top:766px;width:38px;height:2px;background:#a9a9a9"></div>
<div class="a" style="left:950px;top:766px;width:46px;height:2px;background:#b0aaa5"></div>
<div class="a" style="left:1001px;top:766px;width:38px;height:2px;background:#a9a9a9"></div>
<svg class="a" style="left:0;top:728px" width="1366" height="40" viewBox="0 728 1366 40">
<!-- windows logo -->
<path d="M16 741.5l7.3-1v7.3h-7.3z M24.5 740.3l8-1.2v8.7h-8z M16 749h7.3v7.3l-7.3-1z M24.5 749h8v8.7l-8-1.2z" fill="#fff"/>
<!-- search -->
<circle cx="72.5" cy="745.5" r="6.3" fill="none" stroke="#fff" stroke-width="1.3"/>
<path d="M68 750l-4.5 5" stroke="#fff" stroke-width="1.5"/>
<!-- task view -->
<rect x="114.5" y="741.5" width="11.5" height="13" fill="none" stroke="#fff" stroke-width="1.2"/>
<path d="M112 743.5h-1.8v9h1.8 M128.5 743.5h1.8v9h-1.8" fill="none" stroke="#fff" stroke-width="1.1"/>
<!-- explorer -->
<path d="M158 740h8l1.5 1.5h12.5v15.5h-22z" fill="#f4d26c"/>
<path d="M158 744h22v13h-22z" fill="#fbe9a0"/>
<path d="M165 751h8v6h-2.5v-3h-3v3h-2.5z" fill="#2aa8e8"/>
<path d="M162 750h14v2h-14z" fill="#2aa8e8"/>
<!-- wmp -->
<path d="M206 740h18l2 1.5v16h-18l-2-1.5z" fill="#7db8d8"/>
<rect x="224" y="741" width="2" height="16" fill="#5a9cc0"/>
<circle cx="214.5" cy="748.5" r="6.5" fill="#f28a1e"/>
<path d="M212 744.5v8l6-4z" fill="#fff"/>
<!-- origin -->
<circle cx="265" cy="748" r="5.8" fill="none" stroke="#e4663a" stroke-width="6"/>
<path d="M261 740c1-2 3-4 5-4.5c-1 1.5-1 3 0 4z M269 756c-1 2-3 4-5 4.5c1-1.5 1-3 0-4z" fill="#e4663a"/>
<!-- steam -->
<circle cx="313" cy="747.5" r="11" fill="#173a6b"/>
<circle cx="316.5" cy="744.5" r="4.2" fill="none" stroke="#c9cfd6" stroke-width="1.8"/>
<path d="M302.5 749l7 3.5 4.5-5" stroke="#dfe3e8" stroke-width="3.2" fill="none"/>
<!-- qgis -->
<ellipse cx="359" cy="748" rx="6.5" ry="8" fill="none" stroke="#e0e870" stroke-width="3.5"/>
<path d="M361 752l6 6" stroke="#e0e870" stroke-width="3"/>
<path d="M355 756l13-17" stroke="#239a23" stroke-width="2"/>
<path d="M366 737l3 0-1 4z" fill="#239a23"/>
<!-- google earth -->
<circle cx="408.8" cy="746.5" r="11" fill="#9a9a9a"/>
<circle cx="406.5" cy="743.5" r="7.5" fill="#c9c9c9"/>
<path d="M399 741c5-3 9 4 18 3" stroke="#fff" stroke-width="2.2" fill="none"/>
<rect x="400" y="753" width="17" height="5" fill="#555"/>
<!-- ds -->
<path d="M454 737l12.5 21h-14z" fill="#9ec4d8"/>
<path d="M444 742h5c6 0 6 14 0 14h-3z" fill="none" stroke="#9cc64a" stroke-width="3"/>
<path d="M458 747c-3 0 -3 3 0 4s0 4-3 3" stroke="#222" stroke-width="1.6" fill="none"/>
<!-- writer feather -->
<rect x="492.5" y="738.5" width="20" height="20" rx="2" fill="#fff"/>
<path d="M493 737c4 0 7 3 9 7c2 4 4 8 9 13c-5-2-9-5-12-9c-3-3-6-7-6-11z" fill="#3a8ee0"/>
<path d="M497 746c2 3 4 5 6 7c3 2 5 3 8 4c-4 0-7-1-10-3c-2-2-3-5-4-8z" fill="#4fb45a"/>
<path d="M494 738c4 5 9 12 17 19" stroke="#1f5fb0" stroke-width="0.8" fill="none"/>
<!-- paint pen -->
<path d="M540 744l7-6 5 6-4 8z" fill="#f0f0f0"/>
<path d="M546 738l5-2 3 5-5 3z" fill="#f0a050"/>
<path d="M544 758l13-20" stroke="#e83030" stroke-width="2.4"/>
<!-- sketchup red -->
<path d="M587 739l14-2 5 4-1 14-14 3-4-4z" fill="#e02828"/>
<path d="M589 740l12-2 4 3-12 2z" fill="#fff"/>
<path d="M591 746h7M591 749h4M592 753h3" stroke="#fff" stroke-width="1.6" fill="none"/>
<!-- red 2 -->
<path d="M633 741l15-5 5 15-15 5z" fill="#e02828"/>
<path d="M636 742.5l11-3.5M637 746l8-2.5 3 8M640 749l3.5 7" stroke="#fff" stroke-width="1.3" fill="none"/>
<circle cx="641" cy="751" r="2" fill="none" stroke="#fff" stroke-width="1"/>
<!-- red 3 -->
<path d="M681 740l14-3 6 5-2 15-13 3-5-5z" fill="#fff" stroke="#e43232" stroke-width="1.5"/>
<path d="M683 743h12l-1 5h-6v5h9M688 743v10M684 748h4" stroke="#e43232" stroke-width="1.2" fill="none"/>
<!-- chrome -->
<path d="M737.5 747.5L728 742A11 11 0 0 1 747 742z" fill="#db4437"/>
<path d="M737.5 747.5L747 742A11 11 0 0 1 737.5 758.5z" fill="#f4c20d"/>
<path d="M737.5 747.5L737.5 758.5A11 11 0 0 1 728 742z" fill="#0f9d58"/>
<circle cx="737.5" cy="747.5" r="5.2" fill="#fff"/>
<circle cx="737.5" cy="747.5" r="4" fill="#4285f4"/>
<!-- notepad -->
<path d="M774 752l9-14 12 5-8 14z" fill="#cde7ef"/>
<path d="M776 752l8-12 9 3-6 12z" fill="#7fb6cc"/>
<path d="M783 738l12 5" stroke="#9aa" stroke-width="1.5"/>
<!-- word -->
<path d="M821 738.5l12-2.5v23l-12-2.5z" fill="#2b579a"/>
<rect x="831" y="740" width="12" height="17" fill="#fff"/>
<path d="M833 743h8M833 746h8M833 749h8M833 752h8" stroke="#2b579a" stroke-width="1.2"/>
<path d="M822.5 743.5l1.5 7 1.5-5 1.5 5 1.5-7" stroke="#fff" stroke-width="1.3" fill="none"/>
<!-- excel -->
<path d="M868 738.5l12-2.5v23l-12-2.5z" fill="#217346"/>
<rect x="878" y="740" width="12" height="17" fill="#fff"/>
<path d="M880 743h8M880 746h8M880 749h8M880 752h8M884 741v15" stroke="#217346" stroke-width="1.1"/>
<path d="M870 743l5 9M875 743l-5 9" stroke="#fff" stroke-width="1.5"/>
<!-- powerpoint -->
<path d="M914 738.5l12-2.5v23l-12-2.5z" fill="#d04423"/>
<rect x="924" y="740" width="12" height="17" fill="#fff"/>
<circle cx="930" cy="745" r="3.5" fill="#d04423"/>
<path d="M927 751h6M927 754h6" stroke="#d04423" stroke-width="1.2"/>
<path d="M917 754v-10h3.5c2.5 0 2.5 5 0 5h-3.5" stroke="#fff" stroke-width="1.6" fill="none"/>
<!-- depthmapX -->
<rect x="961" y="739" width="23" height="17" fill="#e4e8ec" stroke="#aab" stroke-width="0.8"/>
<rect x="963" y="742" width="11" height="12" fill="#3a8a66"/>
<rect x="964" y="743" width="9" height="10" fill="#6ab07a"/>
<path d="M976 743h6M976 746h6M976 749h6M976 752h6" stroke="#999"/>
<rect x="981.5" y="740.5" width="1" height="5" fill="#1f6fd0"/>
<!-- palette -->
<path d="M1009 748c0-6 7-9 13-8c5 1 7 6 4 9c-2 2-1 4-1 5c0 3-5 4-9 3c-4-1-7-4-7-9z" fill="#cfe3f2"/>
<circle cx="1014" cy="747" r="1.8" fill="#e04040"/><circle cx="1017" cy="743" r="1.8" fill="#40b040"/><circle cx="1022" cy="743" r="1.8" fill="#f0c030"/>
<path d="M1020 757l11-20" stroke="#e08a20" stroke-width="2.4"/>
<!-- tray -->
<path d="M1056.5 752l5.5-5.5 5.5 5.5" fill="none" stroke="#fff" stroke-width="1.2"/>
<rect x="1087.5" y="744.5" width="13" height="7" fill="none" stroke="#fff" stroke-width="1.1"/>
<rect x="1089" y="746" width="5" height="4" fill="#fff"/><rect x="1101" y="746.5" width="1.5" height="3" fill="#fff"/>
<g fill="none" stroke="#fff" stroke-width="1.2">
<path d="M1121 755a12 12 0 0 1 12-12"/><path d="M1124 755a9 9 0 0 1 9-9"/><path d="M1127 755a6 6 0 0 1 6-6"/>
</g>
<rect x="1130" y="752" width="3.5" height="3.5" fill="#fff"/>
<path d="M1150 745.5h3l4-3.5v13l-4-3.5h-3z" fill="none" stroke="#fff" stroke-width="1.1"/>
<path d="M1159.5 745.5a4 4 0 0 1 0 6 M1162 743a8 8 0 0 1 0 11 M1164.5 741a11 11 0 0 1 0 15" fill="none" stroke="#fff" stroke-width="1"/>
<path d="M1182.5 740.5h15v11h-6l-2 3-2-3h-5z" fill="none" stroke="#fff" stroke-width="1.1"/>
<path d="M1185 744h10M1185 747h10" stroke="#fff"/>
<rect x="1214.5" y="742.5" width="22" height="12" rx="1" fill="none" stroke="#fff" stroke-width="1.1"/>
<path d="M1217 745.5h16M1217 748.5h16M1219 751.5h12" stroke="#fff" stroke-dasharray="1.2 0.8"/>
</svg>
<div class="tb" style="left:1251px;top:733px;letter-spacing:0;font-size:12.5px">POR</div>
<div class="tb" style="left:1250px;top:750px;letter-spacing:-0.2px;font-size:12.5px">PTB2</div>
<div class="tb" style="left:1307px;top:733px;letter-spacing:-0.1px;font-size:12.5px">21:03</div>
<div class="tb" style="left:1292px;top:750px;letter-spacing:-0.3px;font-size:12.5px">20/06/2016</div>

<!-- menus -->
<!-- tools popup -->
<div class="a" style="left:197px;top:46px;width:182px;height:125px;background:rgba(0,0,0,0.18);filter:blur(1.5px)"></div>
<div class="a" style="left:194px;top:43px;width:182px;height:125px;background:#f0f0f0;border:1px solid #cfcfcf"></div>
<div class="a" style="left:197px;top:112px;width:175px;height:22px;background:#91c9f7"></div>
<div class="a" style="left:225px;top:138px;width:147px;height:1px;background:#d7d7d7"></div>
<div class="t" style="left:229px;top:51px;letter-spacing:-0.05px">Visibility</div>
<div class="t" style="left:229px;top:73px;letter-spacing:-0.1px">Agent Tools</div>
<div class="t" style="left:229px;top:95px;letter-spacing:-0.4px">Axial / Convex / Pesh</div>
<div class="t" style="left:229px;top:117px;letter-spacing:-0.1px">Segment</div>
<div class="t" style="left:229px;top:148px;letter-spacing:-0.1px">Options...</div>
<svg class="a" style="left:356px;top:50px" width="10" height="80" viewBox="0 50 10 80">
<path d="M3.5 53v8l4-4z M3.5 75v8l4-4z M3.5 97v8l4-4z M3.5 119v8l4-4z" fill="#000"/>
</svg>
<!-- segment submenu -->
<div class="a" style="left:370px;top:112px;width:252px;height:72px;background:#f0f0f0;border:1px solid #cfcfcf"></div>
<div class="t" style="left:405px;top:120px;letter-spacing:-0.15px">Run Angular Segment Analysis...</div>
<div class="t" style="left:405px;top:142px;letter-spacing:-0.05px">Run Topological or Metric Analysis...</div>
<div class="t" style="left:405px;top:164px;letter-spacing:-0.1px">Step Depth</div>
<svg class="a" style="left:600px;top:164px" width="10" height="12" viewBox="0 164 10 12">
<path d="M3 166v8l4-4z" fill="#000"/>
</svg>

</body></html>
